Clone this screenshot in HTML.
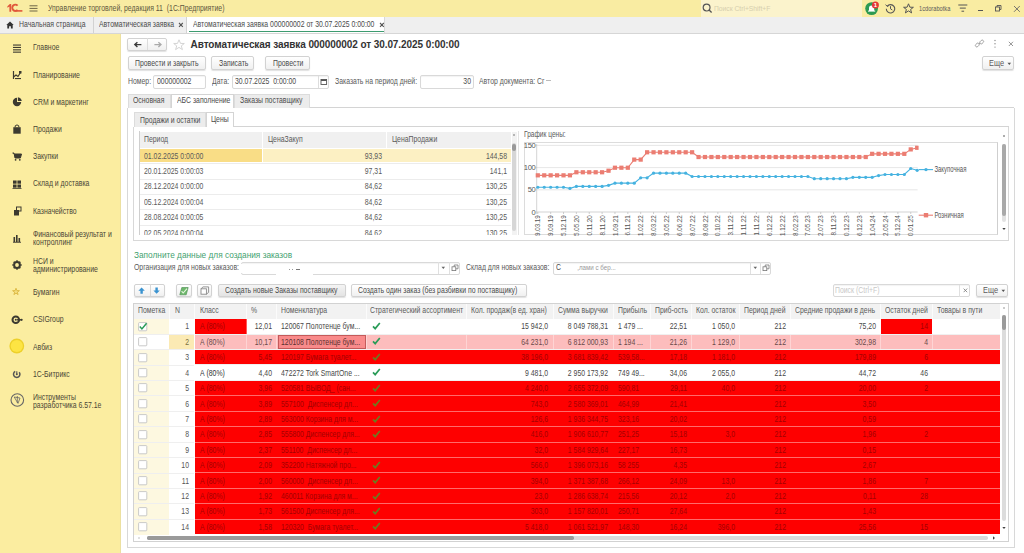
<!DOCTYPE html><html><head><meta charset="utf-8"><style>
html,body{margin:0;padding:0;}
body{width:1024px;height:553px;position:relative;overflow:hidden;background:#fff;font-family:"Liberation Sans", sans-serif;}
div{position:absolute;}
.t{white-space:pre;line-height:20px;height:20px;}
</style></head><body><div style="left:0.00px;top:0.00px;width:1024.00px;height:17.00px;background:#f9eca2;"></div>
<div style="left:0.00px;top:16.50px;width:1024.00px;height:0.80px;background:#e6dba0;"></div>
<svg style="position:absolute;left:0.00px;top:0.00px;" width="30" height="17" viewBox="0 0 30 17"><path d="M7.4 6.3 L9.9 4.1 L11.2 4.1 L11.2 11.7 L9.4 11.7 L9.4 6.6 L7.4 7.8 Z" fill="#e0573b"/><path d="M17.6 5.6 A3.1 3.1 0 1 0 17.6 9.9" fill="none" stroke="#e0573b" stroke-width="1.9"/><rect x="14.6" y="10.1" width="7.8" height="1.6" fill="#e0573b"/></svg>
<svg style="position:absolute;left:29.00px;top:4.50px;" width="9" height="7" viewBox="0 0 9 7"><rect x="0.5" y="0.3" width="8" height="1" fill="#6e6748"/><rect x="0.5" y="2.9" width="8" height="1" fill="#6e6748"/><rect x="0.5" y="5.5" width="8" height="1" fill="#6e6748"/></svg>
<div class="t" style="left:48.00px;top:-1.00px;font-size:8.2px;color:#5e5840;font-weight:400;letter-spacing:0.00px;transform:scaleX(0.84);transform-origin:0 50%;">Управление торговлей, редакция 11  (1С:Предприятие)</div>
<div style="left:700.50px;top:0.00px;width:161.50px;height:16.50px;background:#fbf3cc;"></div>
<svg style="position:absolute;left:701.50px;top:3.00px;" width="11" height="11" viewBox="0 0 11 11"><circle cx="4.6" cy="4.6" r="3.4" fill="none" stroke="#555" stroke-width="1.2"/><line x1="7.1" y1="7.1" x2="9.6" y2="9.6" stroke="#555" stroke-width="1.4"/></svg>
<div class="t" style="left:714.00px;top:-1.00px;font-size:8.0px;color:#d6cfae;font-weight:400;letter-spacing:0.00px;transform:scaleX(0.84);transform-origin:0 50%;">Поиск Ctrl+Shift+F</div>
<svg style="position:absolute;left:864.00px;top:1.00px;" width="17" height="15" viewBox="0 0 17 15"><circle cx="7.6" cy="7.6" r="6.4" fill="#2d9a52"/><path d="M5 10 L5 7 Q5 4.4 7.6 4.4 Q10.2 4.4 10.2 7 L10.2 10 Z" fill="#fff"/><rect x="4" y="9.6" width="7.2" height="1" fill="#fff"/><circle cx="11.4" cy="4" r="3.5" fill="#e53935"/><text x="11.4" y="6.3" font-family="Liberation Sans" font-size="6" font-weight="700" fill="#fff" text-anchor="middle">1</text></svg>
<svg style="position:absolute;left:884.50px;top:3.00px;" width="11" height="11" viewBox="0 0 11 11"><path d="M2.2 3.2 A4.2 4.2 0 1 1 1.3 5.8" fill="none" stroke="#555" stroke-width="1.1"/><path d="M0.6 1.6 L2.4 3.6 L4.2 2.2" fill="none" stroke="#555" stroke-width="1"/><path d="M5.5 3.2 L5.5 5.8 L7.3 7" fill="none" stroke="#555" stroke-width="1"/></svg>
<svg style="position:absolute;left:902.50px;top:2.50px;" width="11" height="11" viewBox="0 0 11 11"><path d="M5.5 0.8 L6.9 4.2 L10.4 4.3 L7.6 6.5 L8.6 9.9 L5.5 7.9 L2.4 9.9 L3.4 6.5 L0.6 4.3 L4.1 4.2 Z" fill="none" stroke="#555" stroke-width="1"/></svg>
<div class="t" style="left:919.40px;top:-1.20px;font-size:7.6px;color:#5a5a5a;font-weight:400;letter-spacing:0.00px;transform:scaleX(0.75);transform-origin:0 50%;">1cdorabotka</div>
<svg style="position:absolute;left:957.50px;top:4.00px;" width="10" height="9" viewBox="0 0 10 9"><rect x="0.3" y="0.5" width="9" height="1" fill="#555"/><rect x="1.8" y="3.6" width="6" height="1" fill="#555"/><rect x="3.5" y="6.7" width="2.6" height="1" fill="#555"/></svg>
<div style="left:977.80px;top:10.00px;width:5.60px;height:1.00px;background:#555;"></div>
<svg style="position:absolute;left:995.00px;top:5.00px;" width="7" height="7" viewBox="0 0 7 7"><rect x="0.5" y="2" width="4" height="4" fill="none" stroke="#555" stroke-width="0.9"/><path d="M2 2 L2 0.5 L6 0.5 L6 4.5 L4.5 4.5" fill="none" stroke="#555" stroke-width="0.9"/></svg>
<svg style="position:absolute;left:1013.00px;top:4.50px;" width="8" height="8" viewBox="0 0 8 8"><path d="M1 1 L6.8 6.8 M6.8 1 L1 6.8" stroke="#666" stroke-width="0.9"/></svg>
<div style="left:0.00px;top:17.30px;width:1024.00px;height:16.40px;background:#efefef;"></div>
<div style="left:0.00px;top:33.20px;width:1024.00px;height:0.80px;background:#d6d6d6;"></div>
<svg style="position:absolute;left:5.50px;top:21.00px;" width="8" height="8" viewBox="0 0 8 8"><path d="M0.3 4 L4 0.4 L7.7 4 L6.7 4 L6.7 7.4 L4.9 7.4 L4.9 5.2 L3.1 5.2 L3.1 7.4 L1.3 7.4 L1.3 4 Z" fill="#333"/></svg>
<div class="t" style="left:19.30px;top:15.40px;font-size:8.2px;color:#4a4a4a;font-weight:400;letter-spacing:0.00px;transform:scaleX(0.84);transform-origin:0 50%;">Начальная страница</div>
<div style="left:93.20px;top:17.30px;width:0.80px;height:16.00px;background:#d2d2d2;"></div>
<div class="t" style="left:99.00px;top:15.40px;font-size:8.2px;color:#4a4a4a;font-weight:400;letter-spacing:0.00px;transform:scaleX(0.84);transform-origin:0 50%;">Автоматическая заявка</div>
<svg style="position:absolute;left:177.80px;top:22.00px;" width="6" height="6" viewBox="0 0 6 6"><path d="M1 1 L4.8 4.8 M4.8 1 L1 4.8" stroke="#555" stroke-width="1.1"/></svg>
<div style="left:186.00px;top:17.30px;width:0.80px;height:16.00px;background:#d2d2d2;"></div>
<div style="left:186.80px;top:17.30px;width:197.20px;height:16.20px;background:#fff;"></div>
<div class="t" style="left:192.60px;top:15.40px;font-size:8.2px;color:#4a4a4a;font-weight:400;letter-spacing:0.00px;transform:scaleX(0.84);transform-origin:0 50%;">Автоматическая заявка 000000002 от 30.07.2025 0:00:00</div>
<svg style="position:absolute;left:378.50px;top:22.00px;" width="6" height="6" viewBox="0 0 6 6"><path d="M1 1 L4.8 4.8 M4.8 1 L1 4.8" stroke="#555" stroke-width="1.1"/></svg>
<div style="left:189.00px;top:30.80px;width:194.50px;height:1.20px;background:#3d9b70;"></div>
<div style="left:384.00px;top:17.30px;width:0.80px;height:16.00px;background:#d8d8d8;"></div>
<div style="left:0.00px;top:34.00px;width:121.00px;height:519.00px;background:#fbeda0;"></div>
<div style="left:120.40px;top:34.00px;width:0.90px;height:519.00px;background:#ece0a0;"></div>
<div class="t" style="left:32.90px;top:38.30px;font-size:8.2px;color:#4a4636;font-weight:400;letter-spacing:0.00px;transform:scaleX(0.84);transform-origin:0 50%;">Главное</div>
<div class="t" style="left:32.90px;top:65.50px;font-size:8.2px;color:#4a4636;font-weight:400;letter-spacing:0.00px;transform:scaleX(0.84);transform-origin:0 50%;">Планирование</div>
<div class="t" style="left:32.90px;top:92.70px;font-size:8.2px;color:#4a4636;font-weight:400;letter-spacing:0.00px;transform:scaleX(0.84);transform-origin:0 50%;">CRM и маркетинг</div>
<div class="t" style="left:32.90px;top:119.90px;font-size:8.2px;color:#4a4636;font-weight:400;letter-spacing:0.00px;transform:scaleX(0.84);transform-origin:0 50%;">Продажи</div>
<div class="t" style="left:32.90px;top:147.10px;font-size:8.2px;color:#4a4636;font-weight:400;letter-spacing:0.00px;transform:scaleX(0.84);transform-origin:0 50%;">Закупки</div>
<div class="t" style="left:32.90px;top:174.30px;font-size:8.2px;color:#4a4636;font-weight:400;letter-spacing:0.00px;transform:scaleX(0.84);transform-origin:0 50%;">Склад и доставка</div>
<div class="t" style="left:32.90px;top:201.50px;font-size:8.2px;color:#4a4636;font-weight:400;letter-spacing:0.00px;transform:scaleX(0.84);transform-origin:0 50%;">Казначейство</div>
<div class="t" style="left:32.90px;top:224.60px;font-size:8.2px;color:#4a4636;font-weight:400;letter-spacing:0.00px;transform:scaleX(0.84);transform-origin:0 50%;">Финансовый результат и</div>
<div class="t" style="left:32.90px;top:232.80px;font-size:8.2px;color:#4a4636;font-weight:400;letter-spacing:0.00px;transform:scaleX(0.84);transform-origin:0 50%;">контроллинг</div>
<div class="t" style="left:32.90px;top:251.80px;font-size:8.2px;color:#4a4636;font-weight:400;letter-spacing:0.00px;transform:scaleX(0.84);transform-origin:0 50%;">НСИ и</div>
<div class="t" style="left:32.90px;top:260.00px;font-size:8.2px;color:#4a4636;font-weight:400;letter-spacing:0.00px;transform:scaleX(0.84);transform-origin:0 50%;">администрирование</div>
<div class="t" style="left:32.90px;top:283.10px;font-size:8.2px;color:#4a4636;font-weight:400;letter-spacing:0.00px;transform:scaleX(0.84);transform-origin:0 50%;">Бумагин</div>
<div class="t" style="left:32.90px;top:310.30px;font-size:8.2px;color:#4a4636;font-weight:400;letter-spacing:0.00px;transform:scaleX(0.84);transform-origin:0 50%;">CSIGroup</div>
<div class="t" style="left:32.90px;top:337.50px;font-size:8.2px;color:#4a4636;font-weight:400;letter-spacing:0.00px;transform:scaleX(0.84);transform-origin:0 50%;">Авбиз</div>
<div class="t" style="left:32.90px;top:364.70px;font-size:8.2px;color:#4a4636;font-weight:400;letter-spacing:0.00px;transform:scaleX(0.84);transform-origin:0 50%;">1С-Битрикс</div>
<div class="t" style="left:32.90px;top:387.80px;font-size:8.2px;color:#4a4636;font-weight:400;letter-spacing:0.00px;transform:scaleX(0.84);transform-origin:0 50%;">Инструменты</div>
<div class="t" style="left:32.90px;top:396.00px;font-size:8.2px;color:#4a4636;font-weight:400;letter-spacing:0.00px;transform:scaleX(0.84);transform-origin:0 50%;">разработчика 6.57.1е</div>
<svg style="position:absolute;left:11.00px;top:41.60px;" width="12" height="12" viewBox="0 0 12 12"><rect x="2" y="2.5" width="8" height="1.1" fill="#3c3a30"/><rect x="2" y="4.9" width="8" height="1.1" fill="#3c3a30"/><rect x="2" y="7.3" width="8" height="1.1" fill="#3c3a30"/><rect x="2" y="9.6" width="8" height="1.1" fill="#3c3a30"/></svg>
<svg style="position:absolute;left:11.00px;top:68.80px;" width="12" height="12" viewBox="0 0 12 12"><path d="M2.5 2 L2.5 10 M2.5 8 L5 6 L7 7.5 L9.5 3.5" fill="none" stroke="#3c3a30" stroke-width="1.2"/><rect x="8" y="2" width="2.5" height="2.5" fill="#3c3a30"/><rect x="4" y="9" width="6" height="1.1" fill="#3c3a30"/></svg>
<svg style="position:absolute;left:11.00px;top:96.00px;" width="12" height="12" viewBox="0 0 12 12"><path d="M6 6 L6 1.8 A4.2 4.2 0 1 0 10.2 6 Z" fill="#3c3a30"/><path d="M6.9 1.2 A4.6 4.6 0 0 1 10.8 5.1 L6.9 5.1 Z" fill="#3c3a30"/></svg>
<svg style="position:absolute;left:11.00px;top:123.20px;" width="12" height="12" viewBox="0 0 12 12"><rect x="2.3" y="4.2" width="7.4" height="6.5" fill="#3c3a30"/><path d="M4.2 4.2 L4.2 2.8 Q6 1 7.8 2.8 L7.8 4.2" fill="none" stroke="#3c3a30" stroke-width="1"/></svg>
<svg style="position:absolute;left:11.00px;top:150.40px;" width="12" height="12" viewBox="0 0 12 12"><path d="M1.5 3 L3 3 L4 8 L9.4 8 L10.5 4 L3.5 4" fill="#3c3a30" stroke="#3c3a30" stroke-width="1"/><circle cx="4.6" cy="9.8" r="0.9" fill="#3c3a30"/><circle cx="8.8" cy="9.8" r="0.9" fill="#3c3a30"/></svg>
<svg style="position:absolute;left:11.00px;top:177.60px;" width="12" height="12" viewBox="0 0 12 12"><rect x="2" y="2.5" width="3.6" height="3.2" fill="#3c3a30"/><rect x="6.4" y="2.5" width="3.6" height="3.2" fill="#3c3a30"/><rect x="2" y="6.5" width="3.6" height="3.2" fill="#3c3a30"/><rect x="6.4" y="6.5" width="3.6" height="3.2" fill="#3c3a30"/><rect x="1.5" y="10" width="9" height="0.8" fill="#3c3a30"/></svg>
<svg style="position:absolute;left:11.00px;top:204.80px;" width="12" height="12" viewBox="0 0 12 12"><rect x="3" y="5" width="5" height="5.5" fill="#3c3a30"/><rect x="5.5" y="2" width="4.5" height="4" fill="none" stroke="#3c3a30" stroke-width="1"/></svg>
<svg style="position:absolute;left:11.00px;top:232.00px;" width="12" height="12" viewBox="0 0 12 12"><rect x="2.5" y="5" width="1.6" height="5" fill="#3c3a30"/><rect x="5" y="3" width="1.6" height="7" fill="#3c3a30"/><rect x="7.5" y="6" width="1.6" height="4" fill="#3c3a30"/><rect x="2" y="9.8" width="8" height="0.9" fill="#3c3a30"/></svg>
<svg style="position:absolute;left:11.00px;top:259.20px;" width="12" height="12" viewBox="0 0 12 12"><circle cx="6" cy="6" r="2.9" fill="none" stroke="#3c3a30" stroke-width="2"/><path d="M6 1.3 L6 2.6 M6 9.4 L6 10.7 M1.3 6 L2.6 6 M9.4 6 L10.7 6 M2.7 2.7 L3.6 3.6 M8.4 8.4 L9.3 9.3 M2.7 9.3 L3.6 8.4 M8.4 3.6 L9.3 2.7" stroke="#3c3a30" stroke-width="1.5"/></svg>
<svg style="position:absolute;left:11.00px;top:286.40px;" width="12" height="12" viewBox="0 0 12 12"><path d="M5 2.2 L5.9 4.6 L8.4 4.7 L6.4 6.2 L7.1 8.6 L5 7.2 L2.9 8.6 L3.6 6.2 L1.6 4.7 L4.1 4.6 Z" fill="#f3dc7a" stroke="#d8b23a" stroke-width="0.8"/></svg>
<svg style="position:absolute;left:11.00px;top:313.60px;" width="12" height="12" viewBox="0 0 12 12"><circle cx="4.8" cy="5.8" r="3.3" fill="none" stroke="#3c3a30" stroke-width="2"/><circle cx="4.8" cy="5.8" r="1" fill="#3c3a30"/><rect x="6" y="5.1" width="4" height="1.4" fill="#3c3a30"/><circle cx="10.6" cy="5.8" r="1.1" fill="#3c3a30"/></svg>
<svg style="position:absolute;left:9.00px;top:338.40px;" width="17" height="17" viewBox="0 0 17 17"><circle cx="7.8" cy="8" r="7.4" fill="#edd02a"/><circle cx="7.8" cy="8" r="6.1" fill="#fde443"/></svg>
<svg style="position:absolute;left:11.00px;top:368.00px;" width="12" height="12" viewBox="0 0 12 12"><path d="M4.2 3.4 A3.2 3.2 0 1 0 8.2 4.2" fill="none" stroke="#555" stroke-width="1.5"/><circle cx="5.8" cy="6.2" r="1" fill="#555"/><path d="M5.8 6.2 L5.8 3.2" stroke="#555" stroke-width="1.1"/></svg>
<svg style="position:absolute;left:8.50px;top:391.40px;" width="18" height="18" viewBox="0 0 18 18"><circle cx="8.3" cy="9" r="6.3" fill="none" stroke="#666" stroke-width="1.1"/><path d="M5.2 6 L11 7 L9 12.4 Z" fill="none" stroke="#666" stroke-width="0.8"/><path d="M8.3 5 L8.3 12" stroke="#666" stroke-width="0.8"/></svg>
<div style="left:127.30px;top:37.60px;width:39.30px;height:13.00px;box-sizing:border-box;border:1px solid #d2d2d2;border-radius:2px;background:linear-gradient(#ffffff,#f0f0f0);box-shadow:0 1px 1px rgba(0,0,0,0.12);"></div>
<div style="left:147.40px;top:38.20px;width:0.80px;height:12.00px;background:#dcdcdc;"></div>
<svg style="position:absolute;left:133.00px;top:39.50px;" width="10" height="10" viewBox="0 0 10 10"><path d="M8.4 4.6 L1.8 4.6 M4.4 2.2 L1.8 4.6 L4.4 7" fill="none" stroke="#3a3a3a" stroke-width="1.4"/></svg>
<svg style="position:absolute;left:152.50px;top:39.50px;" width="10" height="10" viewBox="0 0 10 10"><path d="M1.4 4.6 L8 4.6 M5.4 2.2 L8 4.6 L5.4 7" fill="none" stroke="#aaa" stroke-width="1.3"/></svg>
<svg style="position:absolute;left:172.50px;top:38.50px;" width="12" height="12" viewBox="0 0 12 12"><path d="M6 0.8 L7.5 4.4 L11.3 4.5 L8.3 6.9 L9.4 10.6 L6 8.4 L2.6 10.6 L3.7 6.9 L0.7 4.5 L4.5 4.4 Z" fill="none" stroke="#cfcfcf" stroke-width="0.9"/></svg>
<div class="t" style="left:190.60px;top:35.30px;font-size:10.0px;color:#333;font-weight:700;letter-spacing:-0.08px;transform-origin:0 50%;">Автоматическая заявка 000000002 от 30.07.2025 0:00:00</div>
<svg style="position:absolute;left:973.50px;top:38.00px;" width="11" height="11" viewBox="0 0 11 11"><path d="M4.8 6.2 L6.2 4.8" stroke="#9a9a9a" stroke-width="0.9"/><rect x="1.2" y="5.6" width="4.2" height="2.8" rx="1.3" transform="rotate(-45 3.3 7)" fill="none" stroke="#9a9a9a" stroke-width="0.9"/><rect x="5.6" y="2.6" width="4.2" height="2.8" rx="1.3" transform="rotate(-45 7.7 4)" fill="none" stroke="#9a9a9a" stroke-width="0.9"/></svg>
<svg style="position:absolute;left:992.50px;top:39.00px;" width="4" height="10" viewBox="0 0 4 10"><circle cx="2" cy="1.5" r="0.7" fill="#888"/><circle cx="2" cy="4.8" r="0.7" fill="#888"/><circle cx="2" cy="8.1" r="0.7" fill="#888"/></svg>
<svg style="position:absolute;left:1007.50px;top:41.00px;" width="6" height="6" viewBox="0 0 6 6"><path d="M0.8 0.8 L5 5 M5 0.8 L0.8 5" stroke="#888" stroke-width="0.9"/></svg>
<div style="left:127.50px;top:56.00px;width:78.10px;height:14.00px;box-sizing:border-box;border:1px solid #d2d2d2;border-radius:2px;background:linear-gradient(#ffffff,#f0f0f0);box-shadow:0 1px 1px rgba(0,0,0,0.12);"></div>
<div class="t" style="left:135.00px;top:53.80px;font-size:8.2px;color:#4a4a4a;font-weight:400;letter-spacing:0.00px;transform:scaleX(0.84);transform-origin:0 50%;">Провести и закрыть</div>
<div style="left:210.50px;top:56.00px;width:43.50px;height:14.00px;box-sizing:border-box;border:1px solid #d2d2d2;border-radius:2px;background:linear-gradient(#ffffff,#f0f0f0);box-shadow:0 1px 1px rgba(0,0,0,0.12);"></div>
<div class="t" style="left:218.50px;top:53.80px;font-size:8.2px;color:#4a4a4a;font-weight:400;letter-spacing:0.00px;transform:scaleX(0.84);transform-origin:0 50%;">Записать</div>
<div style="left:265.20px;top:56.00px;width:44.80px;height:14.00px;box-sizing:border-box;border:1px solid #d2d2d2;border-radius:2px;background:linear-gradient(#ffffff,#f0f0f0);box-shadow:0 1px 1px rgba(0,0,0,0.12);"></div>
<div class="t" style="left:272.50px;top:53.80px;font-size:8.2px;color:#4a4a4a;font-weight:400;letter-spacing:0.00px;transform:scaleX(0.84);transform-origin:0 50%;">Провести</div>
<div style="left:981.80px;top:56.00px;width:32.20px;height:13.50px;box-sizing:border-box;border:1px solid #d2d2d2;border-radius:2px;background:linear-gradient(#ffffff,#f0f0f0);box-shadow:0 1px 1px rgba(0,0,0,0.12);"></div>
<div class="t" style="left:988.90px;top:53.60px;font-size:8.2px;color:#5a5a5a;font-weight:400;letter-spacing:0.00px;transform:scaleX(0.9);transform-origin:0 50%;">Еще</div>
<svg style="position:absolute;left:1007.00px;top:61.80px;" width="5" height="4" viewBox="0 0 5 4"><path d="M0.5 0.8 L4.1 0.8 L2.3 3 Z" fill="#555"/></svg>
<div class="t" style="left:128.00px;top:72.40px;font-size:8.2px;color:#5a5a5a;font-weight:400;letter-spacing:0.00px;transform:scaleX(0.84);transform-origin:0 50%;">Номер:</div>
<div style="left:153.00px;top:75.00px;width:53.00px;height:13.60px;box-sizing:border-box;border:1px solid #d9d9d9;border-radius:2px;background:#fff;box-shadow:inset 0 1px 1px rgba(0,0,0,0.05);"></div>
<div class="t" style="left:156.50px;top:72.40px;font-size:8.2px;color:#4a4a4a;font-weight:400;letter-spacing:0.00px;transform:scaleX(0.84);transform-origin:0 50%;">000000002</div>
<div class="t" style="left:212.00px;top:72.40px;font-size:8.2px;color:#5a5a5a;font-weight:400;letter-spacing:0.00px;transform:scaleX(0.84);transform-origin:0 50%;">Дата:</div>
<div style="left:232.00px;top:75.00px;width:97.40px;height:13.60px;box-sizing:border-box;border:1px solid #d9d9d9;border-radius:2px;background:#fff;box-shadow:inset 0 1px 1px rgba(0,0,0,0.05);"></div>
<div style="left:317.50px;top:75.50px;width:0.80px;height:12.60px;background:#ddd;"></div>
<div class="t" style="left:234.50px;top:72.40px;font-size:8.2px;color:#4a4a4a;font-weight:400;letter-spacing:0.00px;transform:scaleX(0.84);transform-origin:0 50%;">30.07.2025  0:00:00</div>
<svg style="position:absolute;left:319.80px;top:77.50px;" width="8" height="8" viewBox="0 0 8 8"><rect x="1" y="1.5" width="5.6" height="5" fill="none" stroke="#555" stroke-width="0.9"/><rect x="1" y="1.5" width="5.6" height="1.5" fill="#555"/></svg>
<div class="t" style="left:334.50px;top:72.40px;font-size:8.2px;color:#5a5a5a;font-weight:400;letter-spacing:0.00px;transform:scaleX(0.84);transform-origin:0 50%;">Заказать на период дней:</div>
<div style="left:420.00px;top:75.00px;width:53.70px;height:13.60px;box-sizing:border-box;border:1px solid #d9d9d9;border-radius:2px;background:#fff;box-shadow:inset 0 1px 1px rgba(0,0,0,0.05);"></div>
<div class="t" style="left:71.00px;width:400px;text-align:right;top:72.40px;font-size:8.2px;color:#4a4a4a;font-weight:400;letter-spacing:0.00px;transform:scaleX(0.84);transform-origin:100% 50%;">30</div>
<div class="t" style="left:478.80px;top:72.40px;font-size:8.2px;color:#5a5a5a;font-weight:400;letter-spacing:0.00px;transform:scaleX(0.84);transform-origin:0 50%;">Автор документа: Сг</div>
<div style="left:546.00px;top:80.00px;width:5.00px;height:0.80px;background:#bbb;"></div>
<div style="left:127.50px;top:107.20px;width:886.80px;height:0.90px;background:#d4d4d4;"></div>
<div style="left:127.50px;top:93.60px;width:43.20px;height:14.00px;box-sizing:border-box;border:1px solid #dcdcdc;border-bottom:none;background:#ececec;"></div>
<div class="t" style="left:133.10px;top:91.40px;font-size:8.2px;color:#4a4a4a;font-weight:400;letter-spacing:0.00px;transform:scaleX(0.84);transform-origin:0 50%;">Основная</div>
<div style="left:170.60px;top:93.60px;width:63.80px;height:14.60px;box-sizing:border-box;border:1px solid #d4d4d4;border-bottom:none;background:#fff;"></div>
<div class="t" style="left:176.60px;top:91.20px;font-size:8.2px;color:#4a4a4a;font-weight:400;letter-spacing:0.00px;transform:scaleX(0.84);transform-origin:0 50%;">АБС заполнение</div>
<div style="left:234.40px;top:93.60px;width:76.00px;height:14.00px;box-sizing:border-box;border:1px solid #dcdcdc;border-bottom:none;background:#ececec;"></div>
<div class="t" style="left:240.20px;top:91.40px;font-size:8.2px;color:#4a4a4a;font-weight:400;letter-spacing:0.00px;transform:scaleX(0.84);transform-origin:0 50%;">Заказы поставщику</div>
<div style="left:127.20px;top:107.50px;width:0.90px;height:440.00px;background:#d8d8d8;"></div>
<div style="left:1013.60px;top:107.50px;width:0.90px;height:440.00px;background:#d8d8d8;"></div>
<div style="left:127.20px;top:546.80px;width:887.30px;height:0.90px;background:#d8d8d8;"></div>
<div style="left:133.70px;top:126.40px;width:875.00px;height:0.90px;background:#d4d4d4;"></div>
<div style="left:133.70px;top:112.40px;width:72.00px;height:14.20px;box-sizing:border-box;border:1px solid #dcdcdc;border-bottom:none;background:#ececec;"></div>
<div class="t" style="left:139.50px;top:110.60px;font-size:8.2px;color:#4a4a4a;font-weight:400;letter-spacing:0.00px;transform:scaleX(0.84);transform-origin:0 50%;">Продажи и остатки</div>
<div style="left:205.60px;top:112.40px;width:28.40px;height:14.60px;box-sizing:border-box;border:1px solid #d4d4d4;border-bottom:none;background:#fff;"></div>
<div class="t" style="left:211.20px;top:110.40px;font-size:8.2px;color:#4a4a4a;font-weight:400;letter-spacing:0.00px;transform:scaleX(0.84);transform-origin:0 50%;">Цены</div>
<div style="left:133.40px;top:126.50px;width:0.90px;height:114.00px;background:#d8d8d8;"></div>
<div style="left:1008.10px;top:126.50px;width:0.90px;height:114.00px;background:#d8d8d8;"></div>
<div style="left:133.40px;top:239.50px;width:875.60px;height:0.90px;background:#d8d8d8;"></div>
<div style="left:139.00px;top:130.50px;width:0.90px;height:104.50px;background:#cfcfcf;"></div>
<div style="left:139.90px;top:131.50px;width:370.90px;height:16.30px;background:#f0f0f0;"></div>
<div style="left:262.20px;top:131.50px;width:0.80px;height:16.30px;background:#fff;"></div>
<div style="left:386.30px;top:131.50px;width:0.80px;height:16.30px;background:#fff;"></div>
<div class="t" style="left:144.00px;top:129.80px;font-size:8.2px;color:#5a5a5a;font-weight:400;letter-spacing:0.00px;transform:scaleX(0.84);transform-origin:0 50%;">Период</div>
<div class="t" style="left:267.80px;top:129.80px;font-size:8.2px;color:#5a5a5a;font-weight:400;letter-spacing:0.00px;transform:scaleX(0.84);transform-origin:0 50%;">ЦенаЗакуп</div>
<div class="t" style="left:391.80px;top:129.80px;font-size:8.2px;color:#5a5a5a;font-weight:400;letter-spacing:0.00px;transform:scaleX(0.84);transform-origin:0 50%;">ЦенаПродажи</div>
<div style="left:139.90px;top:149.00px;width:122.30px;height:12.60px;background:#f9dd86;"></div>
<div style="left:263.00px;top:149.00px;width:247.80px;height:12.60px;background:#fcf0c3;"></div>
<div class="t" style="left:144.00px;top:146.50px;font-size:8.2px;color:#5a5a5a;font-weight:400;letter-spacing:0.00px;transform:scaleX(0.84);transform-origin:0 50%;">01.02.2025 0:00:00</div>
<div class="t" style="left:-17.80px;width:400px;text-align:right;top:146.50px;font-size:8.2px;color:#5a5a5a;font-weight:400;letter-spacing:0.00px;transform:scaleX(0.84);transform-origin:100% 50%;">93,93</div>
<div class="t" style="left:107.20px;width:400px;text-align:right;top:146.50px;font-size:8.2px;color:#5a5a5a;font-weight:400;letter-spacing:0.00px;transform:scaleX(0.84);transform-origin:100% 50%;">144,58</div>
<div style="left:139.90px;top:163.20px;width:370.90px;height:0.80px;background:#ececec;"></div>
<div class="t" style="left:144.00px;top:161.90px;font-size:8.2px;color:#5a5a5a;font-weight:400;letter-spacing:0.00px;transform:scaleX(0.84);transform-origin:0 50%;">20.01.2025 0:00:03</div>
<div class="t" style="left:-17.80px;width:400px;text-align:right;top:161.90px;font-size:8.2px;color:#5a5a5a;font-weight:400;letter-spacing:0.00px;transform:scaleX(0.84);transform-origin:100% 50%;">97,31</div>
<div class="t" style="left:107.20px;width:400px;text-align:right;top:161.90px;font-size:8.2px;color:#5a5a5a;font-weight:400;letter-spacing:0.00px;transform:scaleX(0.84);transform-origin:100% 50%;">141,1</div>
<div style="left:139.90px;top:178.60px;width:370.90px;height:0.80px;background:#ececec;"></div>
<div class="t" style="left:144.00px;top:177.30px;font-size:8.2px;color:#5a5a5a;font-weight:400;letter-spacing:0.00px;transform:scaleX(0.84);transform-origin:0 50%;">28.12.2024 0:00:00</div>
<div class="t" style="left:-17.80px;width:400px;text-align:right;top:177.30px;font-size:8.2px;color:#5a5a5a;font-weight:400;letter-spacing:0.00px;transform:scaleX(0.84);transform-origin:100% 50%;">84,62</div>
<div class="t" style="left:107.20px;width:400px;text-align:right;top:177.30px;font-size:8.2px;color:#5a5a5a;font-weight:400;letter-spacing:0.00px;transform:scaleX(0.84);transform-origin:100% 50%;">130,25</div>
<div style="left:139.90px;top:194.00px;width:370.90px;height:0.80px;background:#ececec;"></div>
<div class="t" style="left:144.00px;top:192.70px;font-size:8.2px;color:#5a5a5a;font-weight:400;letter-spacing:0.00px;transform:scaleX(0.84);transform-origin:0 50%;">05.12.2024 0:00:04</div>
<div class="t" style="left:-17.80px;width:400px;text-align:right;top:192.70px;font-size:8.2px;color:#5a5a5a;font-weight:400;letter-spacing:0.00px;transform:scaleX(0.84);transform-origin:100% 50%;">84,62</div>
<div class="t" style="left:107.20px;width:400px;text-align:right;top:192.70px;font-size:8.2px;color:#5a5a5a;font-weight:400;letter-spacing:0.00px;transform:scaleX(0.84);transform-origin:100% 50%;">130,25</div>
<div style="left:139.90px;top:209.40px;width:370.90px;height:0.80px;background:#ececec;"></div>
<div class="t" style="left:144.00px;top:208.10px;font-size:8.2px;color:#5a5a5a;font-weight:400;letter-spacing:0.00px;transform:scaleX(0.84);transform-origin:0 50%;">28.08.2024 0:00:05</div>
<div class="t" style="left:-17.80px;width:400px;text-align:right;top:208.10px;font-size:8.2px;color:#5a5a5a;font-weight:400;letter-spacing:0.00px;transform:scaleX(0.84);transform-origin:100% 50%;">84,62</div>
<div class="t" style="left:107.20px;width:400px;text-align:right;top:208.10px;font-size:8.2px;color:#5a5a5a;font-weight:400;letter-spacing:0.00px;transform:scaleX(0.84);transform-origin:100% 50%;">130,25</div>
<div style="left:139.90px;top:224.80px;width:370.90px;height:0.80px;background:#ececec;"></div>
<div class="t" style="left:144.00px;top:223.50px;font-size:8.2px;color:#5a5a5a;font-weight:400;letter-spacing:0.00px;transform:scaleX(0.84);transform-origin:0 50%;">02.05.2024 0:00:04</div>
<div class="t" style="left:-17.80px;width:400px;text-align:right;top:223.50px;font-size:8.2px;color:#5a5a5a;font-weight:400;letter-spacing:0.00px;transform:scaleX(0.84);transform-origin:100% 50%;">84,62</div>
<div class="t" style="left:107.20px;width:400px;text-align:right;top:223.50px;font-size:8.2px;color:#5a5a5a;font-weight:400;letter-spacing:0.00px;transform:scaleX(0.84);transform-origin:100% 50%;">130,25</div>
<div style="left:139.90px;top:234.60px;width:378.00px;height:5.00px;background:#fff;"></div>
<div style="left:511.50px;top:131.50px;width:5.20px;height:103.00px;background:#f2f2f2;"></div>
<div style="left:511.80px;top:143.00px;width:4.40px;height:88.00px;background:#d6d6d6;border-radius:2px;"></div>
<div style="left:511.80px;top:143.50px;width:4.40px;height:7.00px;background:#999;border-radius:2px;"></div>
<svg style="position:absolute;left:512.00px;top:133.00px;" width="4" height="4" viewBox="0 0 4 4"><circle cx="2" cy="2" r="0.8" fill="#666"/></svg>
<div style="left:518.20px;top:130.50px;width:0.80px;height:104.50px;background:#e2e2e2;"></div>
<div class="t" style="left:524.20px;top:125.20px;font-size:8.2px;color:#5a5a5a;font-weight:400;letter-spacing:0.00px;transform:scaleX(0.8);transform-origin:0 50%;">График цены:</div>
<div style="left:524.00px;top:142.00px;width:473.50px;height:93.00px;box-sizing:border-box;border:1px solid #dcdcdc;border-right:1px solid #cfcfcf;background:#fff;"></div>
<div style="left:1001.60px;top:143.50px;width:4.60px;height:78.50px;background:#e2e2e2;border-radius:2.3px;"></div>
<div style="left:1001.60px;top:143.50px;width:4.60px;height:72.20px;background:#a9a9a9;border-radius:2.3px;"></div>
<svg style="position:absolute;left:1002.00px;top:134.00px;" width="4" height="4" viewBox="0 0 4 4"><circle cx="2" cy="2" r="0.8" fill="#444"/></svg>
<svg style="position:absolute;left:1002.00px;top:227.00px;" width="4" height="4" viewBox="0 0 4 4"><path d="M0.3 1 L3.7 1 L2 3 Z" fill="#444"/></svg>
<svg style="position:absolute;left:0;top:0" width="1024" height="553" viewBox="0 0 1024 553"><line x1="536.7" y1="145.40" x2="917.6" y2="145.40" stroke="#e0e0e0" stroke-width="0.8"/><line x1="536.7" y1="167.60" x2="917.6" y2="167.60" stroke="#e0e0e0" stroke-width="0.8"/><line x1="536.7" y1="189.80" x2="917.6" y2="189.80" stroke="#e0e0e0" stroke-width="0.8"/><line x1="536.7" y1="212" x2="917.6" y2="212" stroke="#c8c8c8" stroke-width="0.8"/><line x1="536.7" y1="144" x2="536.7" y2="214" stroke="#c8c8c8" stroke-width="0.8"/><text x="535.3" y="148.00" font-family="Liberation Sans" font-size="7.6" fill="#555" text-anchor="end" letter-spacing="-0.4">150</text><line x1="534.8" y1="145.40" x2="536.7" y2="145.40" stroke="#bbb" stroke-width="0.7"/><text x="535.3" y="170.20" font-family="Liberation Sans" font-size="7.6" fill="#555" text-anchor="end" letter-spacing="-0.4">100</text><line x1="534.8" y1="167.60" x2="536.7" y2="167.60" stroke="#bbb" stroke-width="0.7"/><text x="535.3" y="192.40" font-family="Liberation Sans" font-size="7.6" fill="#555" text-anchor="end" letter-spacing="-0.4">50</text><line x1="534.8" y1="189.80" x2="536.7" y2="189.80" stroke="#bbb" stroke-width="0.7"/><text x="535.3" y="214.60" font-family="Liberation Sans" font-size="7.6" fill="#555" text-anchor="end" letter-spacing="-0.4">0</text><line x1="534.8" y1="212.00" x2="536.7" y2="212.00" stroke="#bbb" stroke-width="0.7"/><polyline points="537.80,187.27 544.23,187.27 550.66,187.27 557.09,187.27 563.52,187.27 569.95,188.38 576.38,186.38 582.81,186.38 589.24,186.38 595.67,186.38 602.10,186.38 608.53,185.36 614.96,183.14 621.39,183.14 627.82,183.14 634.25,183.14 640.68,177.81 647.11,177.81 653.54,173.15 659.97,173.15 666.40,173.15 672.83,173.15 679.26,173.15 685.69,173.15 692.12,176.48 698.55,176.48 704.98,176.48 711.41,176.48 717.84,176.48 724.27,176.48 730.70,176.48 737.13,176.48 743.56,176.48 749.99,176.48 756.42,176.48 762.85,176.48 769.28,176.48 775.71,176.48 782.14,176.48 788.57,176.48 795.00,176.48 801.43,176.48 807.86,176.48 814.29,178.70 820.72,178.70 827.15,178.70 833.58,178.70 840.01,178.70 846.44,178.70 852.87,177.37 859.30,177.37 865.73,177.37 872.16,177.37 878.59,175.59 885.02,174.48 891.45,174.48 897.88,174.48 904.31,174.48 910.74,168.49 917.17,170.31" fill="none" stroke="#45b2e0" stroke-width="1.1"/><polyline points="537.80,175.33 544.23,175.33 550.66,175.33 557.09,175.33 563.52,175.33 569.95,175.33 576.38,172.26 582.81,172.26 589.24,172.26 595.67,172.26 602.10,172.26 608.53,170.71 614.96,167.73 621.39,167.73 627.82,167.73 634.25,159.61 640.68,159.61 647.11,152.28 653.54,152.28 659.97,152.28 666.40,152.28 672.83,152.28 679.26,152.28 685.69,152.28 692.12,152.28 698.55,157.03 704.98,157.03 711.41,157.03 717.84,157.03 724.27,157.03 730.70,157.03 737.13,157.03 743.56,157.03 749.99,157.03 756.42,157.03 762.85,157.03 769.28,157.03 775.71,157.03 782.14,157.03 788.57,157.03 795.00,157.03 801.43,157.03 807.86,157.03 814.29,157.03 820.72,157.03 827.15,157.03 833.58,157.03 840.01,157.03 846.44,157.03 852.87,157.03 859.30,157.03 865.73,157.03 872.16,153.84 878.59,153.84 885.02,153.84 891.45,153.84 897.88,153.84 904.31,153.84 910.74,149.40 917.17,147.80" fill="none" stroke="#eb7d72" stroke-width="1.1"/><circle cx="537.80" cy="187.27" r="1.6" fill="#45b2e0"/><circle cx="544.23" cy="187.27" r="1.6" fill="#45b2e0"/><circle cx="550.66" cy="187.27" r="1.6" fill="#45b2e0"/><circle cx="557.09" cy="187.27" r="1.6" fill="#45b2e0"/><circle cx="563.52" cy="187.27" r="1.6" fill="#45b2e0"/><circle cx="569.95" cy="188.38" r="1.6" fill="#45b2e0"/><circle cx="576.38" cy="186.38" r="1.6" fill="#45b2e0"/><circle cx="582.81" cy="186.38" r="1.6" fill="#45b2e0"/><circle cx="589.24" cy="186.38" r="1.6" fill="#45b2e0"/><circle cx="595.67" cy="186.38" r="1.6" fill="#45b2e0"/><circle cx="602.10" cy="186.38" r="1.6" fill="#45b2e0"/><circle cx="608.53" cy="185.36" r="1.6" fill="#45b2e0"/><circle cx="614.96" cy="183.14" r="1.6" fill="#45b2e0"/><circle cx="621.39" cy="183.14" r="1.6" fill="#45b2e0"/><circle cx="627.82" cy="183.14" r="1.6" fill="#45b2e0"/><circle cx="634.25" cy="183.14" r="1.6" fill="#45b2e0"/><circle cx="640.68" cy="177.81" r="1.6" fill="#45b2e0"/><circle cx="647.11" cy="177.81" r="1.6" fill="#45b2e0"/><circle cx="653.54" cy="173.15" r="1.6" fill="#45b2e0"/><circle cx="659.97" cy="173.15" r="1.6" fill="#45b2e0"/><circle cx="666.40" cy="173.15" r="1.6" fill="#45b2e0"/><circle cx="672.83" cy="173.15" r="1.6" fill="#45b2e0"/><circle cx="679.26" cy="173.15" r="1.6" fill="#45b2e0"/><circle cx="685.69" cy="173.15" r="1.6" fill="#45b2e0"/><circle cx="692.12" cy="176.48" r="1.6" fill="#45b2e0"/><circle cx="698.55" cy="176.48" r="1.6" fill="#45b2e0"/><circle cx="704.98" cy="176.48" r="1.6" fill="#45b2e0"/><circle cx="711.41" cy="176.48" r="1.6" fill="#45b2e0"/><circle cx="717.84" cy="176.48" r="1.6" fill="#45b2e0"/><circle cx="724.27" cy="176.48" r="1.6" fill="#45b2e0"/><circle cx="730.70" cy="176.48" r="1.6" fill="#45b2e0"/><circle cx="737.13" cy="176.48" r="1.6" fill="#45b2e0"/><circle cx="743.56" cy="176.48" r="1.6" fill="#45b2e0"/><circle cx="749.99" cy="176.48" r="1.6" fill="#45b2e0"/><circle cx="756.42" cy="176.48" r="1.6" fill="#45b2e0"/><circle cx="762.85" cy="176.48" r="1.6" fill="#45b2e0"/><circle cx="769.28" cy="176.48" r="1.6" fill="#45b2e0"/><circle cx="775.71" cy="176.48" r="1.6" fill="#45b2e0"/><circle cx="782.14" cy="176.48" r="1.6" fill="#45b2e0"/><circle cx="788.57" cy="176.48" r="1.6" fill="#45b2e0"/><circle cx="795.00" cy="176.48" r="1.6" fill="#45b2e0"/><circle cx="801.43" cy="176.48" r="1.6" fill="#45b2e0"/><circle cx="807.86" cy="176.48" r="1.6" fill="#45b2e0"/><circle cx="814.29" cy="178.70" r="1.6" fill="#45b2e0"/><circle cx="820.72" cy="178.70" r="1.6" fill="#45b2e0"/><circle cx="827.15" cy="178.70" r="1.6" fill="#45b2e0"/><circle cx="833.58" cy="178.70" r="1.6" fill="#45b2e0"/><circle cx="840.01" cy="178.70" r="1.6" fill="#45b2e0"/><circle cx="846.44" cy="178.70" r="1.6" fill="#45b2e0"/><circle cx="852.87" cy="177.37" r="1.6" fill="#45b2e0"/><circle cx="859.30" cy="177.37" r="1.6" fill="#45b2e0"/><circle cx="865.73" cy="177.37" r="1.6" fill="#45b2e0"/><circle cx="872.16" cy="177.37" r="1.6" fill="#45b2e0"/><circle cx="878.59" cy="175.59" r="1.6" fill="#45b2e0"/><circle cx="885.02" cy="174.48" r="1.6" fill="#45b2e0"/><circle cx="891.45" cy="174.48" r="1.6" fill="#45b2e0"/><circle cx="897.88" cy="174.48" r="1.6" fill="#45b2e0"/><circle cx="904.31" cy="174.48" r="1.6" fill="#45b2e0"/><circle cx="910.74" cy="168.49" r="1.6" fill="#45b2e0"/><circle cx="917.17" cy="170.31" r="1.6" fill="#45b2e0"/><defs><clipPath id="pc"><rect x="530" y="140" width="388.6" height="80"/></clipPath></defs><g clip-path="url(#pc)"><rect x="535.70" y="173.23" width="4.2" height="4.2" fill="#eb7d72"/><rect x="542.13" y="173.23" width="4.2" height="4.2" fill="#eb7d72"/><rect x="548.56" y="173.23" width="4.2" height="4.2" fill="#eb7d72"/><rect x="554.99" y="173.23" width="4.2" height="4.2" fill="#eb7d72"/><rect x="561.42" y="173.23" width="4.2" height="4.2" fill="#eb7d72"/><rect x="567.85" y="173.23" width="4.2" height="4.2" fill="#eb7d72"/><rect x="574.28" y="170.16" width="4.2" height="4.2" fill="#eb7d72"/><rect x="580.71" y="170.16" width="4.2" height="4.2" fill="#eb7d72"/><rect x="587.14" y="170.16" width="4.2" height="4.2" fill="#eb7d72"/><rect x="593.57" y="170.16" width="4.2" height="4.2" fill="#eb7d72"/><rect x="600.00" y="170.16" width="4.2" height="4.2" fill="#eb7d72"/><rect x="606.43" y="168.61" width="4.2" height="4.2" fill="#eb7d72"/><rect x="612.86" y="165.63" width="4.2" height="4.2" fill="#eb7d72"/><rect x="619.29" y="165.63" width="4.2" height="4.2" fill="#eb7d72"/><rect x="625.72" y="165.63" width="4.2" height="4.2" fill="#eb7d72"/><rect x="632.15" y="157.51" width="4.2" height="4.2" fill="#eb7d72"/><rect x="638.58" y="157.51" width="4.2" height="4.2" fill="#eb7d72"/><rect x="645.01" y="150.18" width="4.2" height="4.2" fill="#eb7d72"/><rect x="651.44" y="150.18" width="4.2" height="4.2" fill="#eb7d72"/><rect x="657.87" y="150.18" width="4.2" height="4.2" fill="#eb7d72"/><rect x="664.30" y="150.18" width="4.2" height="4.2" fill="#eb7d72"/><rect x="670.73" y="150.18" width="4.2" height="4.2" fill="#eb7d72"/><rect x="677.16" y="150.18" width="4.2" height="4.2" fill="#eb7d72"/><rect x="683.59" y="150.18" width="4.2" height="4.2" fill="#eb7d72"/><rect x="690.02" y="150.18" width="4.2" height="4.2" fill="#eb7d72"/><rect x="696.45" y="154.93" width="4.2" height="4.2" fill="#eb7d72"/><rect x="702.88" y="154.93" width="4.2" height="4.2" fill="#eb7d72"/><rect x="709.31" y="154.93" width="4.2" height="4.2" fill="#eb7d72"/><rect x="715.74" y="154.93" width="4.2" height="4.2" fill="#eb7d72"/><rect x="722.17" y="154.93" width="4.2" height="4.2" fill="#eb7d72"/><rect x="728.60" y="154.93" width="4.2" height="4.2" fill="#eb7d72"/><rect x="735.03" y="154.93" width="4.2" height="4.2" fill="#eb7d72"/><rect x="741.46" y="154.93" width="4.2" height="4.2" fill="#eb7d72"/><rect x="747.89" y="154.93" width="4.2" height="4.2" fill="#eb7d72"/><rect x="754.32" y="154.93" width="4.2" height="4.2" fill="#eb7d72"/><rect x="760.75" y="154.93" width="4.2" height="4.2" fill="#eb7d72"/><rect x="767.18" y="154.93" width="4.2" height="4.2" fill="#eb7d72"/><rect x="773.61" y="154.93" width="4.2" height="4.2" fill="#eb7d72"/><rect x="780.04" y="154.93" width="4.2" height="4.2" fill="#eb7d72"/><rect x="786.47" y="154.93" width="4.2" height="4.2" fill="#eb7d72"/><rect x="792.90" y="154.93" width="4.2" height="4.2" fill="#eb7d72"/><rect x="799.33" y="154.93" width="4.2" height="4.2" fill="#eb7d72"/><rect x="805.76" y="154.93" width="4.2" height="4.2" fill="#eb7d72"/><rect x="812.19" y="154.93" width="4.2" height="4.2" fill="#eb7d72"/><rect x="818.62" y="154.93" width="4.2" height="4.2" fill="#eb7d72"/><rect x="825.05" y="154.93" width="4.2" height="4.2" fill="#eb7d72"/><rect x="831.48" y="154.93" width="4.2" height="4.2" fill="#eb7d72"/><rect x="837.91" y="154.93" width="4.2" height="4.2" fill="#eb7d72"/><rect x="844.34" y="154.93" width="4.2" height="4.2" fill="#eb7d72"/><rect x="850.77" y="154.93" width="4.2" height="4.2" fill="#eb7d72"/><rect x="857.20" y="154.93" width="4.2" height="4.2" fill="#eb7d72"/><rect x="863.63" y="154.93" width="4.2" height="4.2" fill="#eb7d72"/><rect x="870.06" y="151.74" width="4.2" height="4.2" fill="#eb7d72"/><rect x="876.49" y="151.74" width="4.2" height="4.2" fill="#eb7d72"/><rect x="882.92" y="151.74" width="4.2" height="4.2" fill="#eb7d72"/><rect x="889.35" y="151.74" width="4.2" height="4.2" fill="#eb7d72"/><rect x="895.78" y="151.74" width="4.2" height="4.2" fill="#eb7d72"/><rect x="902.21" y="151.74" width="4.2" height="4.2" fill="#eb7d72"/><rect x="908.64" y="147.30" width="4.2" height="4.2" fill="#eb7d72"/><rect x="915.07" y="145.70" width="4.2" height="4.2" fill="#eb7d72"/></g><line x1="537.80" y1="212" x2="537.80" y2="214" stroke="#bbb" stroke-width="0.7"/><text transform="translate(540.40,215.2) rotate(-90) scale(0.8,1)" x="0" y="0" font-family="Liberation Sans" font-size="7.8" fill="#555" text-anchor="end">9.03.19</text><line x1="550.66" y1="212" x2="550.66" y2="214" stroke="#bbb" stroke-width="0.7"/><text transform="translate(553.26,215.2) rotate(-90) scale(0.8,1)" x="0" y="0" font-family="Liberation Sans" font-size="7.8" fill="#555" text-anchor="end">9.09.19</text><line x1="563.52" y1="212" x2="563.52" y2="214" stroke="#bbb" stroke-width="0.7"/><text transform="translate(566.12,215.2) rotate(-90) scale(0.8,1)" x="0" y="0" font-family="Liberation Sans" font-size="7.8" fill="#555" text-anchor="end">5.12.19</text><line x1="576.38" y1="212" x2="576.38" y2="214" stroke="#bbb" stroke-width="0.7"/><text transform="translate(578.98,215.2) rotate(-90) scale(0.8,1)" x="0" y="0" font-family="Liberation Sans" font-size="7.8" fill="#555" text-anchor="end">5.05.20</text><line x1="589.24" y1="212" x2="589.24" y2="214" stroke="#bbb" stroke-width="0.7"/><text transform="translate(591.84,215.2) rotate(-90) scale(0.8,1)" x="0" y="0" font-family="Liberation Sans" font-size="7.8" fill="#555" text-anchor="end">0.11.20</text><line x1="602.10" y1="212" x2="602.10" y2="214" stroke="#bbb" stroke-width="0.7"/><text transform="translate(604.70,215.2) rotate(-90) scale(0.8,1)" x="0" y="0" font-family="Liberation Sans" font-size="7.8" fill="#555" text-anchor="end">8.11.20</text><line x1="614.96" y1="212" x2="614.96" y2="214" stroke="#bbb" stroke-width="0.7"/><text transform="translate(617.56,215.2) rotate(-90) scale(0.8,1)" x="0" y="0" font-family="Liberation Sans" font-size="7.8" fill="#555" text-anchor="end">1.09.21</text><line x1="627.82" y1="212" x2="627.82" y2="214" stroke="#bbb" stroke-width="0.7"/><text transform="translate(630.42,215.2) rotate(-90) scale(0.8,1)" x="0" y="0" font-family="Liberation Sans" font-size="7.8" fill="#555" text-anchor="end">6.11.21</text><line x1="640.68" y1="212" x2="640.68" y2="214" stroke="#bbb" stroke-width="0.7"/><text transform="translate(643.28,215.2) rotate(-90) scale(0.8,1)" x="0" y="0" font-family="Liberation Sans" font-size="7.8" fill="#555" text-anchor="end">1.02.22</text><line x1="653.54" y1="212" x2="653.54" y2="214" stroke="#bbb" stroke-width="0.7"/><text transform="translate(656.14,215.2) rotate(-90) scale(0.8,1)" x="0" y="0" font-family="Liberation Sans" font-size="7.8" fill="#555" text-anchor="end">8.03.22</text><line x1="666.40" y1="212" x2="666.40" y2="214" stroke="#bbb" stroke-width="0.7"/><text transform="translate(669.00,215.2) rotate(-90) scale(0.8,1)" x="0" y="0" font-family="Liberation Sans" font-size="7.8" fill="#555" text-anchor="end">3.05.22</text><line x1="679.26" y1="212" x2="679.26" y2="214" stroke="#bbb" stroke-width="0.7"/><text transform="translate(681.86,215.2) rotate(-90) scale(0.8,1)" x="0" y="0" font-family="Liberation Sans" font-size="7.8" fill="#555" text-anchor="end">6.06.22</text><line x1="692.12" y1="212" x2="692.12" y2="214" stroke="#bbb" stroke-width="0.7"/><text transform="translate(694.72,215.2) rotate(-90) scale(0.8,1)" x="0" y="0" font-family="Liberation Sans" font-size="7.8" fill="#555" text-anchor="end">8.07.22</text><line x1="704.98" y1="212" x2="704.98" y2="214" stroke="#bbb" stroke-width="0.7"/><text transform="translate(707.58,215.2) rotate(-90) scale(0.8,1)" x="0" y="0" font-family="Liberation Sans" font-size="7.8" fill="#555" text-anchor="end">8.08.22</text><line x1="717.84" y1="212" x2="717.84" y2="214" stroke="#bbb" stroke-width="0.7"/><text transform="translate(720.44,215.2) rotate(-90) scale(0.8,1)" x="0" y="0" font-family="Liberation Sans" font-size="7.8" fill="#555" text-anchor="end">0.10.22</text><line x1="730.70" y1="212" x2="730.70" y2="214" stroke="#bbb" stroke-width="0.7"/><text transform="translate(733.30,215.2) rotate(-90) scale(0.8,1)" x="0" y="0" font-family="Liberation Sans" font-size="7.8" fill="#555" text-anchor="end">3.11.22</text><line x1="743.56" y1="212" x2="743.56" y2="214" stroke="#bbb" stroke-width="0.7"/><text transform="translate(746.16,215.2) rotate(-90) scale(0.8,1)" x="0" y="0" font-family="Liberation Sans" font-size="7.8" fill="#555" text-anchor="end">1.11.22</text><line x1="756.42" y1="212" x2="756.42" y2="214" stroke="#bbb" stroke-width="0.7"/><text transform="translate(759.02,215.2) rotate(-90) scale(0.8,1)" x="0" y="0" font-family="Liberation Sans" font-size="7.8" fill="#555" text-anchor="end">1.11.22</text><line x1="769.28" y1="212" x2="769.28" y2="214" stroke="#bbb" stroke-width="0.7"/><text transform="translate(771.88,215.2) rotate(-90) scale(0.8,1)" x="0" y="0" font-family="Liberation Sans" font-size="7.8" fill="#555" text-anchor="end">6.12.22</text><line x1="782.14" y1="212" x2="782.14" y2="214" stroke="#bbb" stroke-width="0.7"/><text transform="translate(784.74,215.2) rotate(-90) scale(0.8,1)" x="0" y="0" font-family="Liberation Sans" font-size="7.8" fill="#555" text-anchor="end">1.12.22</text><line x1="795.00" y1="212" x2="795.00" y2="214" stroke="#bbb" stroke-width="0.7"/><text transform="translate(797.60,215.2) rotate(-90) scale(0.8,1)" x="0" y="0" font-family="Liberation Sans" font-size="7.8" fill="#555" text-anchor="end">8.02.23</text><line x1="807.86" y1="212" x2="807.86" y2="214" stroke="#bbb" stroke-width="0.7"/><text transform="translate(810.46,215.2) rotate(-90) scale(0.8,1)" x="0" y="0" font-family="Liberation Sans" font-size="7.8" fill="#555" text-anchor="end">7.05.23</text><line x1="820.72" y1="212" x2="820.72" y2="214" stroke="#bbb" stroke-width="0.7"/><text transform="translate(823.32,215.2) rotate(-90) scale(0.8,1)" x="0" y="0" font-family="Liberation Sans" font-size="7.8" fill="#555" text-anchor="end">2.07.23</text><line x1="833.58" y1="212" x2="833.58" y2="214" stroke="#bbb" stroke-width="0.7"/><text transform="translate(836.18,215.2) rotate(-90) scale(0.8,1)" x="0" y="0" font-family="Liberation Sans" font-size="7.8" fill="#555" text-anchor="end">8.11.23</text><line x1="846.44" y1="212" x2="846.44" y2="214" stroke="#bbb" stroke-width="0.7"/><text transform="translate(849.04,215.2) rotate(-90) scale(0.8,1)" x="0" y="0" font-family="Liberation Sans" font-size="7.8" fill="#555" text-anchor="end">0.12.23</text><line x1="859.30" y1="212" x2="859.30" y2="214" stroke="#bbb" stroke-width="0.7"/><text transform="translate(861.90,215.2) rotate(-90) scale(0.8,1)" x="0" y="0" font-family="Liberation Sans" font-size="7.8" fill="#555" text-anchor="end">6.12.23</text><line x1="872.16" y1="212" x2="872.16" y2="214" stroke="#bbb" stroke-width="0.7"/><text transform="translate(874.76,215.2) rotate(-90) scale(0.8,1)" x="0" y="0" font-family="Liberation Sans" font-size="7.8" fill="#555" text-anchor="end">1.04.24</text><line x1="885.02" y1="212" x2="885.02" y2="214" stroke="#bbb" stroke-width="0.7"/><text transform="translate(887.62,215.2) rotate(-90) scale(0.8,1)" x="0" y="0" font-family="Liberation Sans" font-size="7.8" fill="#555" text-anchor="end">2.05.24</text><line x1="897.88" y1="212" x2="897.88" y2="214" stroke="#bbb" stroke-width="0.7"/><text transform="translate(900.48,215.2) rotate(-90) scale(0.8,1)" x="0" y="0" font-family="Liberation Sans" font-size="7.8" fill="#555" text-anchor="end">5.12.24</text><line x1="910.74" y1="212" x2="910.74" y2="214" stroke="#bbb" stroke-width="0.7"/><text transform="translate(913.34,215.2) rotate(-90) scale(0.8,1)" x="0" y="0" font-family="Liberation Sans" font-size="7.8" fill="#555" text-anchor="end">0.01.25</text><line x1="918.7" y1="169.6" x2="933" y2="169.6" stroke="#45b2e0" stroke-width="1.1"/><circle cx="926" cy="169.6" r="1.7" fill="#45b2e0"/><text transform="translate(934.4,172.4) scale(0.73,1)" font-family="Liberation Sans" font-size="8.2" fill="#555">Закупочная</text><line x1="918.7" y1="215.2" x2="933" y2="215.2" stroke="#eb7d72" stroke-width="1.1"/><rect x="923.8" y="213" width="4.4" height="4.4" fill="#eb7d72"/><text transform="translate(934.4,218) scale(0.73,1)" font-family="Liberation Sans" font-size="8.2" fill="#555">Розничная</text></svg>
<div class="t" style="left:133.60px;top:244.80px;font-size:9.85px;color:#44a270;font-weight:400;letter-spacing:0.00px;transform:scaleX(0.84);transform-origin:0 50%;">Заполните данные для создания заказов</div>
<div class="t" style="left:133.60px;top:257.80px;font-size:8.2px;color:#5a5a5a;font-weight:400;letter-spacing:0.00px;transform:scaleX(0.84);transform-origin:0 50%;">Организация для новых заказов:</div>
<div style="left:241.40px;top:261.50px;width:218.60px;height:13.00px;box-sizing:border-box;border:1px solid #d9d9d9;border-radius:2px;background:#fff;box-shadow:inset 0 1px 1px rgba(0,0,0,0.05);"></div>
<div style="left:240.80px;top:263.50px;width:2.50px;height:9.00px;background:#fff;"></div>
<div style="left:276.00px;top:273.00px;width:37.00px;height:2.50px;background:#fff;"></div>
<div style="left:288.50px;top:269.20px;width:1.00px;height:0.90px;background:#999;"></div>
<div style="left:292.00px;top:269.20px;width:1.00px;height:0.90px;background:#999;"></div>
<div style="left:296.00px;top:269.00px;width:3.50px;height:1.20px;background:#777;"></div>
<div style="left:438.00px;top:262.00px;width:0.80px;height:12.00px;background:#e0e0e0;"></div>
<div style="left:448.60px;top:262.00px;width:0.80px;height:12.00px;background:#e0e0e0;"></div>
<svg style="position:absolute;left:441.00px;top:266.00px;" width="5" height="4" viewBox="0 0 5 4"><path d="M0.5 0.8 L4.1 0.8 L2.3 3 Z" fill="#666"/></svg>
<svg style="position:absolute;left:450.50px;top:264.00px;" width="8" height="8" viewBox="0 0 8 8"><rect x="1" y="2.8" width="3.8" height="3.8" fill="none" stroke="#777" stroke-width="0.8"/><path d="M3.2 2.8 L3.2 1 L7 1 L7 4.8 L4.8 4.8" fill="none" stroke="#777" stroke-width="0.8"/></svg>
<div class="t" style="left:466.00px;top:257.80px;font-size:8.2px;color:#5a5a5a;font-weight:400;letter-spacing:0.00px;transform:scaleX(0.84);transform-origin:0 50%;">Склад для новых заказов:</div>
<div style="left:553.00px;top:261.50px;width:218.20px;height:13.00px;box-sizing:border-box;border:1px solid #d9d9d9;border-radius:2px;background:#fff;box-shadow:inset 0 1px 1px rgba(0,0,0,0.05);"></div>
<div style="left:750.40px;top:262.00px;width:0.80px;height:12.00px;background:#e0e0e0;"></div>
<div style="left:760.20px;top:262.00px;width:0.80px;height:12.00px;background:#e0e0e0;"></div>
<div class="t" style="left:555.80px;top:257.80px;font-size:8.2px;color:#4a4a4a;font-weight:400;letter-spacing:0.00px;transform:scaleX(0.84);transform-origin:0 50%;">С</div>
<div class="t" style="left:572.00px;top:258.40px;font-size:7.4px;color:#999;font-weight:400;letter-spacing:0.00px;transform:scaleX(0.84);transform-origin:0 50%;">   ,лами с бер...</div>
<svg style="position:absolute;left:753.30px;top:266.00px;" width="5" height="4" viewBox="0 0 5 4"><path d="M0.5 0.8 L4.1 0.8 L2.3 3 Z" fill="#666"/></svg>
<svg style="position:absolute;left:762.00px;top:264.00px;" width="8" height="8" viewBox="0 0 8 8"><rect x="1" y="2.8" width="3.8" height="3.8" fill="none" stroke="#777" stroke-width="0.8"/><path d="M3.2 2.8 L3.2 1 L7 1 L7 4.8 L4.8 4.8" fill="none" stroke="#777" stroke-width="0.8"/></svg>
<div style="left:133.60px;top:283.80px;width:31.70px;height:13.20px;box-sizing:border-box;border:1px solid #d2d2d2;border-radius:2px;background:linear-gradient(#ffffff,#f0f0f0);box-shadow:0 1px 1px rgba(0,0,0,0.12);"></div>
<div style="left:149.50px;top:284.30px;width:0.80px;height:12.20px;background:#d8d8d8;"></div>
<svg style="position:absolute;left:137.50px;top:286.50px;" width="8" height="8" viewBox="0 0 8 8"><path d="M3.6 0.6 L6.8 3.8 L4.8 3.8 L4.8 6.8 L2.4 6.8 L2.4 3.8 L0.4 3.8 Z" fill="#3a93d0"/></svg>
<svg style="position:absolute;left:153.00px;top:286.50px;" width="8" height="8" viewBox="0 0 8 8"><path d="M3.6 6.8 L6.8 3.6 L4.8 3.6 L4.8 0.6 L2.4 0.6 L2.4 3.6 L0.4 3.6 Z" fill="#3a93d0"/></svg>
<div style="left:176.20px;top:283.80px;width:15.70px;height:13.20px;box-sizing:border-box;border:1px solid #d2d2d2;border-radius:2px;background:linear-gradient(#ffffff,#f0f0f0);box-shadow:0 1px 1px rgba(0,0,0,0.12);"></div>
<svg style="position:absolute;left:179.00px;top:285.50px;" width="10" height="10" viewBox="0 0 10 10"><path d="M2.8 1.5 L9.2 1.5 L7.2 8.8 L0.8 8.8 Z" fill="#6cb86a" stroke="#4a8a50" stroke-width="0.6"/><path d="M2.6 5.2 L4.2 7 L8 2.6" fill="none" stroke="#e8f5e0" stroke-width="1.1"/></svg>
<div style="left:197.20px;top:283.80px;width:15.30px;height:13.20px;box-sizing:border-box;border:1px solid #d2d2d2;border-radius:2px;background:linear-gradient(#ffffff,#f0f0f0);box-shadow:0 1px 1px rgba(0,0,0,0.12);"></div>
<svg style="position:absolute;left:200.20px;top:286.00px;" width="10" height="9" viewBox="0 0 10 9"><rect x="1" y="2.8" width="5.4" height="5.4" fill="#fff" stroke="#8a8a8a" stroke-width="0.9"/><path d="M1 2.8 L3 0.9 L8.6 0.9 L8.6 6.4 L6.4 8.2" fill="none" stroke="#8a8a8a" stroke-width="0.9"/></svg>
<div style="left:218.00px;top:283.80px;width:128.30px;height:13.20px;box-sizing:border-box;border:1px solid #d2d2d2;border-radius:2px;background:linear-gradient(#f4f4f4,#e4e4e4);box-shadow:0 1px 1px rgba(0,0,0,0.12);"></div>
<div class="t" style="left:224.60px;top:280.50px;font-size:8.2px;color:#4a4a4a;font-weight:400;letter-spacing:0.00px;transform:scaleX(0.84);transform-origin:0 50%;">Создать новые Заказы поставщику</div>
<div style="left:351.30px;top:283.80px;width:175.70px;height:13.20px;box-sizing:border-box;border:1px solid #d2d2d2;border-radius:2px;background:linear-gradient(#ffffff,#f0f0f0);box-shadow:0 1px 1px rgba(0,0,0,0.12);"></div>
<div class="t" style="left:358.00px;top:280.50px;font-size:8.2px;color:#4a4a4a;font-weight:400;letter-spacing:0.00px;transform:scaleX(0.84);transform-origin:0 50%;">Создать один заказ (без разбивки по поставщику)</div>
<div style="left:832.50px;top:284.00px;width:137.70px;height:13.00px;box-sizing:border-box;border:1px solid #d9d9d9;border-radius:2px;background:#fff;box-shadow:inset 0 1px 1px rgba(0,0,0,0.05);"></div>
<div style="left:959.40px;top:284.50px;width:0.80px;height:12.00px;background:#e0e0e0;"></div>
<div class="t" style="left:835.30px;top:280.50px;font-size:8.2px;color:#c8c8c8;font-weight:400;letter-spacing:0.00px;transform:scaleX(0.84);transform-origin:0 50%;">Поиск (Ctrl+F)</div>
<svg style="position:absolute;left:962.50px;top:288.00px;" width="5" height="5" viewBox="0 0 5 5"><path d="M0.6 0.6 L4.2 4.2 M4.2 0.6 L0.6 4.2" stroke="#777" stroke-width="0.8"/></svg>
<div style="left:976.20px;top:284.00px;width:31.80px;height:13.00px;box-sizing:border-box;border:1px solid #d2d2d2;border-radius:2px;background:linear-gradient(#ffffff,#f0f0f0);box-shadow:0 1px 1px rgba(0,0,0,0.12);"></div>
<div class="t" style="left:983.20px;top:280.90px;font-size:8.2px;color:#5a5a5a;font-weight:400;letter-spacing:0.00px;transform:scaleX(0.9);transform-origin:0 50%;">Еще</div>
<svg style="position:absolute;left:1000.50px;top:289.40px;" width="5" height="4" viewBox="0 0 5 4"><path d="M0.5 0.8 L4.1 0.8 L2.3 3 Z" fill="#555"/></svg>
<div style="left:133.10px;top:302.50px;width:875.50px;height:239.40px;box-sizing:border-box;border:1px solid #d2d2d2;background:#fff;"></div>
<div style="left:134.10px;top:303.50px;width:866.20px;height:15.30px;background:#f2f2f2;"></div>
<div style="left:168.80px;top:303.50px;width:0.80px;height:15.30px;background:#fbfbfb;"></div>
<div style="left:194.10px;top:303.50px;width:0.80px;height:15.30px;background:#fbfbfb;"></div>
<div style="left:246.20px;top:303.50px;width:0.80px;height:15.30px;background:#fbfbfb;"></div>
<div style="left:276.20px;top:303.50px;width:0.80px;height:15.30px;background:#fbfbfb;"></div>
<div style="left:365.70px;top:303.50px;width:0.80px;height:15.30px;background:#fbfbfb;"></div>
<div style="left:466.00px;top:303.50px;width:0.80px;height:15.30px;background:#fbfbfb;"></div>
<div style="left:553.20px;top:303.50px;width:0.80px;height:15.30px;background:#fbfbfb;"></div>
<div style="left:613.00px;top:303.50px;width:0.80px;height:15.30px;background:#fbfbfb;"></div>
<div style="left:650.10px;top:303.50px;width:0.80px;height:15.30px;background:#fbfbfb;"></div>
<div style="left:691.20px;top:303.50px;width:0.80px;height:15.30px;background:#fbfbfb;"></div>
<div style="left:739.10px;top:303.50px;width:0.80px;height:15.30px;background:#fbfbfb;"></div>
<div style="left:789.90px;top:303.50px;width:0.80px;height:15.30px;background:#fbfbfb;"></div>
<div style="left:880.00px;top:303.50px;width:0.80px;height:15.30px;background:#fbfbfb;"></div>
<div style="left:932.00px;top:303.50px;width:0.80px;height:15.30px;background:#fbfbfb;"></div>
<div class="t" style="left:137.80px;top:301.20px;font-size:8.2px;color:#5a5a5a;font-weight:400;letter-spacing:0.00px;transform:scaleX(0.84);transform-origin:0 50%;">Пометка</div>
<div class="t" style="left:174.50px;top:301.20px;font-size:8.2px;color:#5a5a5a;font-weight:400;letter-spacing:0.00px;transform:scaleX(0.84);transform-origin:0 50%;">N</div>
<div class="t" style="left:199.60px;top:301.20px;font-size:8.2px;color:#5a5a5a;font-weight:400;letter-spacing:0.00px;transform:scaleX(0.84);transform-origin:0 50%;">Класс</div>
<div class="t" style="left:251.00px;top:301.20px;font-size:8.2px;color:#5a5a5a;font-weight:400;letter-spacing:0.00px;transform:scaleX(0.84);transform-origin:0 50%;">%</div>
<div class="t" style="left:281.30px;top:301.20px;font-size:8.2px;color:#5a5a5a;font-weight:400;letter-spacing:0.00px;transform:scaleX(0.84);transform-origin:0 50%;">Номенклатура</div>
<div class="t" style="left:370.20px;top:301.20px;font-size:8.2px;color:#5a5a5a;font-weight:400;letter-spacing:0.00px;transform:scaleX(0.84);transform-origin:0 50%;">Стратегический ассортимент</div>
<div class="t" style="left:470.80px;top:301.20px;font-size:8.2px;color:#5a5a5a;font-weight:400;letter-spacing:0.00px;transform:scaleX(0.84);transform-origin:0 50%;">Кол. продаж(в ед. хран)</div>
<div class="t" style="left:557.80px;top:301.20px;font-size:8.2px;color:#5a5a5a;font-weight:400;letter-spacing:0.00px;transform:scaleX(0.84);transform-origin:0 50%;">Сумма выручки</div>
<div class="t" style="left:617.50px;top:301.20px;font-size:8.2px;color:#5a5a5a;font-weight:400;letter-spacing:0.00px;transform:scaleX(0.84);transform-origin:0 50%;">Прибыль</div>
<div class="t" style="left:655.00px;top:301.20px;font-size:8.2px;color:#5a5a5a;font-weight:400;letter-spacing:0.00px;transform:scaleX(0.84);transform-origin:0 50%;">Приб-ость</div>
<div class="t" style="left:695.80px;top:301.20px;font-size:8.2px;color:#5a5a5a;font-weight:400;letter-spacing:0.00px;transform:scaleX(0.84);transform-origin:0 50%;">Кол. остаток</div>
<div class="t" style="left:743.50px;top:301.20px;font-size:8.2px;color:#5a5a5a;font-weight:400;letter-spacing:0.00px;transform:scaleX(0.84);transform-origin:0 50%;">Период дней</div>
<div class="t" style="left:795.00px;top:301.20px;font-size:8.2px;color:#5a5a5a;font-weight:400;letter-spacing:0.00px;transform:scaleX(0.84);transform-origin:0 50%;">Средние продажи в день</div>
<div class="t" style="left:884.80px;top:301.20px;font-size:8.2px;color:#5a5a5a;font-weight:400;letter-spacing:0.00px;transform:scaleX(0.84);transform-origin:0 50%;">Остаток дней</div>
<div class="t" style="left:936.80px;top:301.20px;font-size:8.2px;color:#5a5a5a;font-weight:400;letter-spacing:0.00px;transform:scaleX(0.84);transform-origin:0 50%;">Товары в пути</div>
<div style="left:133.90px;top:318.80px;width:35.30px;height:15.42px;background:#fdf8e0;"></div>
<div style="left:194.80px;top:319.10px;width:51.80px;height:14.62px;background:#fe0000;"></div>
<div style="left:880.80px;top:319.10px;width:51.60px;height:14.62px;background:#fe0000;"></div>
<div style="left:194.10px;top:319.30px;width:0.80px;height:14.42px;background:rgba(255,255,255,0.35);"></div>
<div style="left:246.20px;top:319.30px;width:0.80px;height:14.42px;background:rgba(255,255,255,0.35);"></div>
<div style="left:276.20px;top:319.30px;width:0.80px;height:14.42px;background:rgba(255,255,255,0.35);"></div>
<div style="left:365.70px;top:319.30px;width:0.80px;height:14.42px;background:rgba(255,255,255,0.35);"></div>
<div style="left:466.00px;top:319.30px;width:0.80px;height:14.42px;background:rgba(255,255,255,0.35);"></div>
<div style="left:553.20px;top:319.30px;width:0.80px;height:14.42px;background:rgba(255,255,255,0.35);"></div>
<div style="left:613.00px;top:319.30px;width:0.80px;height:14.42px;background:rgba(255,255,255,0.35);"></div>
<div style="left:650.10px;top:319.30px;width:0.80px;height:14.42px;background:rgba(255,255,255,0.35);"></div>
<div style="left:691.20px;top:319.30px;width:0.80px;height:14.42px;background:rgba(255,255,255,0.35);"></div>
<div style="left:739.10px;top:319.30px;width:0.80px;height:14.42px;background:rgba(255,255,255,0.35);"></div>
<div style="left:789.90px;top:319.30px;width:0.80px;height:14.42px;background:rgba(255,255,255,0.35);"></div>
<div style="left:880.00px;top:319.30px;width:0.80px;height:14.42px;background:rgba(255,255,255,0.35);"></div>
<div style="left:932.00px;top:319.30px;width:0.80px;height:14.42px;background:rgba(255,255,255,0.35);"></div>
<svg style="position:absolute;left:138.00px;top:321.70px;" width="10" height="10" viewBox="0 0 10 10"><rect x="0.6" y="0.6" width="8.2" height="8.2" rx="0.8" fill="#fff" stroke="#c4c4c4" stroke-width="0.9"/><path d="M1.8 4.6 L3.9 6.9 L8.6 1.2" fill="none" stroke="#2a9c58" stroke-width="1.5"/></svg>
<div class="t" style="left:-210.60px;width:400px;text-align:right;top:317.41px;font-size:8.2px;color:#555;font-weight:400;letter-spacing:0.00px;transform:scaleX(0.84);transform-origin:100% 50%;">1</div>
<div class="t" style="left:199.60px;top:317.41px;font-size:8.2px;color:#a30000;font-weight:400;letter-spacing:0.00px;transform:scaleX(0.84);transform-origin:0 50%;">А (80%)</div>
<div class="t" style="left:-127.80px;width:400px;text-align:right;top:317.41px;font-size:8.2px;color:#484848;font-weight:400;letter-spacing:0.00px;transform:scaleX(0.84);transform-origin:100% 50%;">12,01</div>
<div class="t" style="left:281.30px;top:317.41px;font-size:8.2px;color:#484848;font-weight:400;letter-spacing:0.00px;transform:scaleX(0.84);transform-origin:0 50%;">120067 Полотенце бум...</div>
<svg style="position:absolute;left:372.00px;top:322.00px;" width="10" height="9" viewBox="0 0 10 9"><path d="M1 4.3 L3.2 6.6 L7.8 1.0" fill="none" stroke="#2a9c58" stroke-width="1.7"/></svg>
<div class="t" style="left:148.40px;width:400px;text-align:right;top:317.41px;font-size:8.2px;color:#484848;font-weight:400;letter-spacing:0.00px;transform:scaleX(0.84);transform-origin:100% 50%;">15 942,0</div>
<div class="t" style="left:208.20px;width:400px;text-align:right;top:317.41px;font-size:8.2px;color:#484848;font-weight:400;letter-spacing:0.00px;transform:scaleX(0.84);transform-origin:100% 50%;">8 049 788,31</div>
<div class="t" style="left:617.50px;top:317.41px;font-size:8.2px;color:#484848;font-weight:400;letter-spacing:0.00px;transform:scaleX(0.84);transform-origin:0 50%;">1 479 ...</div>
<div class="t" style="left:286.80px;width:400px;text-align:right;top:317.41px;font-size:8.2px;color:#484848;font-weight:400;letter-spacing:0.00px;transform:scaleX(0.84);transform-origin:100% 50%;">22,51</div>
<div class="t" style="left:335.30px;width:400px;text-align:right;top:317.41px;font-size:8.2px;color:#484848;font-weight:400;letter-spacing:0.00px;transform:scaleX(0.84);transform-origin:100% 50%;">1 050,0</div>
<div class="t" style="left:386.00px;width:400px;text-align:right;top:317.41px;font-size:8.2px;color:#484848;font-weight:400;letter-spacing:0.00px;transform:scaleX(0.84);transform-origin:100% 50%;">212</div>
<div class="t" style="left:476.20px;width:400px;text-align:right;top:317.41px;font-size:8.2px;color:#484848;font-weight:400;letter-spacing:0.00px;transform:scaleX(0.84);transform-origin:100% 50%;">75,20</div>
<div class="t" style="left:528.00px;width:400px;text-align:right;top:317.41px;font-size:8.2px;color:#a30000;font-weight:400;letter-spacing:0.00px;transform:scaleX(0.84);transform-origin:100% 50%;">14</div>
<div style="left:133.90px;top:334.22px;width:35.30px;height:15.42px;background:#fff;"></div>
<div style="left:169.20px;top:334.22px;width:25.30px;height:15.42px;background:#fbeab4;"></div>
<div style="left:194.80px;top:334.52px;width:805.40px;height:14.62px;background:#fdbdbd;"></div>
<div style="left:133.90px;top:333.72px;width:60.60px;height:0.80px;background:#efefef;"></div>
<div style="left:194.50px;top:333.62px;width:805.70px;height:1.00px;background:#f0f0f0;"></div>
<div style="left:194.10px;top:334.72px;width:0.80px;height:14.42px;background:rgba(255,255,255,0.35);"></div>
<div style="left:246.20px;top:334.72px;width:0.80px;height:14.42px;background:rgba(255,255,255,0.35);"></div>
<div style="left:276.20px;top:334.72px;width:0.80px;height:14.42px;background:rgba(255,255,255,0.35);"></div>
<div style="left:365.70px;top:334.72px;width:0.80px;height:14.42px;background:rgba(255,255,255,0.35);"></div>
<div style="left:466.00px;top:334.72px;width:0.80px;height:14.42px;background:rgba(255,255,255,0.35);"></div>
<div style="left:553.20px;top:334.72px;width:0.80px;height:14.42px;background:rgba(255,255,255,0.35);"></div>
<div style="left:613.00px;top:334.72px;width:0.80px;height:14.42px;background:rgba(255,255,255,0.35);"></div>
<div style="left:650.10px;top:334.72px;width:0.80px;height:14.42px;background:rgba(255,255,255,0.35);"></div>
<div style="left:691.20px;top:334.72px;width:0.80px;height:14.42px;background:rgba(255,255,255,0.35);"></div>
<div style="left:739.10px;top:334.72px;width:0.80px;height:14.42px;background:rgba(255,255,255,0.35);"></div>
<div style="left:789.90px;top:334.72px;width:0.80px;height:14.42px;background:rgba(255,255,255,0.35);"></div>
<div style="left:880.00px;top:334.72px;width:0.80px;height:14.42px;background:rgba(255,255,255,0.35);"></div>
<div style="left:932.00px;top:334.72px;width:0.80px;height:14.42px;background:rgba(255,255,255,0.35);"></div>
<svg style="position:absolute;left:138.00px;top:337.12px;" width="10" height="10" viewBox="0 0 10 10"><rect x="0.6" y="0.6" width="8.2" height="8.2" rx="0.8" fill="#fff" stroke="#c4c4c4" stroke-width="0.9"/></svg>
<div class="t" style="left:-210.60px;width:400px;text-align:right;top:332.83px;font-size:8.2px;color:#7a7040;font-weight:400;letter-spacing:0.00px;transform:scaleX(0.84);transform-origin:100% 50%;">2</div>
<div class="t" style="left:199.60px;top:332.83px;font-size:8.2px;color:#6a4a4a;font-weight:400;letter-spacing:0.00px;transform:scaleX(0.84);transform-origin:0 50%;">А (80%)</div>
<div class="t" style="left:-127.80px;width:400px;text-align:right;top:332.83px;font-size:8.2px;color:#6a4a4a;font-weight:400;letter-spacing:0.00px;transform:scaleX(0.84);transform-origin:100% 50%;">10,17</div>
<div style="left:277.60px;top:335.12px;width:88.00px;height:13.62px;box-sizing:border-box;border:1px solid #c45a5a;background:#f98a8a;"></div>
<div class="t" style="left:281.30px;top:332.83px;font-size:8.2px;color:#5a3030;font-weight:400;letter-spacing:0.00px;transform:scaleX(0.84);transform-origin:0 50%;">120108 Полотенце бум...</div>
<svg style="position:absolute;left:372.00px;top:337.42px;" width="10" height="9" viewBox="0 0 10 9"><path d="M1 4.3 L3.2 6.6 L7.8 1.0" fill="none" stroke="#2a9c58" stroke-width="1.7"/></svg>
<div class="t" style="left:148.40px;width:400px;text-align:right;top:332.83px;font-size:8.2px;color:#6a4a4a;font-weight:400;letter-spacing:0.00px;transform:scaleX(0.84);transform-origin:100% 50%;">64 231,0</div>
<div class="t" style="left:208.20px;width:400px;text-align:right;top:332.83px;font-size:8.2px;color:#6a4a4a;font-weight:400;letter-spacing:0.00px;transform:scaleX(0.84);transform-origin:100% 50%;">6 812 000,93</div>
<div class="t" style="left:617.50px;top:332.83px;font-size:8.2px;color:#6a4a4a;font-weight:400;letter-spacing:0.00px;transform:scaleX(0.84);transform-origin:0 50%;">1 194 ...</div>
<div class="t" style="left:286.80px;width:400px;text-align:right;top:332.83px;font-size:8.2px;color:#6a4a4a;font-weight:400;letter-spacing:0.00px;transform:scaleX(0.84);transform-origin:100% 50%;">21,26</div>
<div class="t" style="left:335.30px;width:400px;text-align:right;top:332.83px;font-size:8.2px;color:#6a4a4a;font-weight:400;letter-spacing:0.00px;transform:scaleX(0.84);transform-origin:100% 50%;">1 129,0</div>
<div class="t" style="left:386.00px;width:400px;text-align:right;top:332.83px;font-size:8.2px;color:#6a4a4a;font-weight:400;letter-spacing:0.00px;transform:scaleX(0.84);transform-origin:100% 50%;">212</div>
<div class="t" style="left:476.20px;width:400px;text-align:right;top:332.83px;font-size:8.2px;color:#6a4a4a;font-weight:400;letter-spacing:0.00px;transform:scaleX(0.84);transform-origin:100% 50%;">302,98</div>
<div class="t" style="left:528.00px;width:400px;text-align:right;top:332.83px;font-size:8.2px;color:#6a4a4a;font-weight:400;letter-spacing:0.00px;transform:scaleX(0.84);transform-origin:100% 50%;">4</div>
<div style="left:133.90px;top:349.64px;width:35.30px;height:15.42px;background:#fdf8e0;"></div>
<div style="left:194.80px;top:349.94px;width:805.40px;height:14.62px;background:#fe0000;"></div>
<div style="left:133.90px;top:349.14px;width:60.60px;height:0.80px;background:#efefef;"></div>
<div style="left:194.50px;top:349.04px;width:805.70px;height:1.00px;background:#f0f0f0;"></div>
<svg style="position:absolute;left:138.00px;top:352.54px;" width="10" height="10" viewBox="0 0 10 10"><rect x="0.6" y="0.6" width="8.2" height="8.2" rx="0.8" fill="#fff" stroke="#c4c4c4" stroke-width="0.9"/></svg>
<div class="t" style="left:-210.60px;width:400px;text-align:right;top:348.25px;font-size:8.2px;color:#555;font-weight:400;letter-spacing:0.00px;transform:scaleX(0.84);transform-origin:100% 50%;">3</div>
<div class="t" style="left:199.60px;top:348.25px;font-size:8.2px;color:#a30000;font-weight:400;letter-spacing:0.00px;transform:scaleX(0.84);transform-origin:0 50%;">А (80%)</div>
<div class="t" style="left:-127.80px;width:400px;text-align:right;top:348.25px;font-size:8.2px;color:#a30000;font-weight:400;letter-spacing:0.00px;transform:scaleX(0.84);transform-origin:100% 50%;">5,45</div>
<div class="t" style="left:281.30px;top:348.25px;font-size:8.2px;color:#a30000;font-weight:400;letter-spacing:0.00px;transform:scaleX(0.84);transform-origin:0 50%;">120197 Бумага туалет...</div>
<svg style="position:absolute;left:372.00px;top:352.84px;" width="10" height="9" viewBox="0 0 10 9"><path d="M1 4.3 L3.2 6.6 L7.8 1.0" fill="none" stroke="#6e7a20" stroke-width="1.7"/></svg>
<div class="t" style="left:148.40px;width:400px;text-align:right;top:348.25px;font-size:8.2px;color:#a30000;font-weight:400;letter-spacing:0.00px;transform:scaleX(0.84);transform-origin:100% 50%;">38 196,0</div>
<div class="t" style="left:208.20px;width:400px;text-align:right;top:348.25px;font-size:8.2px;color:#a30000;font-weight:400;letter-spacing:0.00px;transform:scaleX(0.84);transform-origin:100% 50%;">3 681 839,42</div>
<div class="t" style="left:617.50px;top:348.25px;font-size:8.2px;color:#a30000;font-weight:400;letter-spacing:0.00px;transform:scaleX(0.84);transform-origin:0 50%;">539,58...</div>
<div class="t" style="left:286.80px;width:400px;text-align:right;top:348.25px;font-size:8.2px;color:#a30000;font-weight:400;letter-spacing:0.00px;transform:scaleX(0.84);transform-origin:100% 50%;">17,18</div>
<div class="t" style="left:335.30px;width:400px;text-align:right;top:348.25px;font-size:8.2px;color:#a30000;font-weight:400;letter-spacing:0.00px;transform:scaleX(0.84);transform-origin:100% 50%;">1 181,0</div>
<div class="t" style="left:386.00px;width:400px;text-align:right;top:348.25px;font-size:8.2px;color:#a30000;font-weight:400;letter-spacing:0.00px;transform:scaleX(0.84);transform-origin:100% 50%;">212</div>
<div class="t" style="left:476.20px;width:400px;text-align:right;top:348.25px;font-size:8.2px;color:#a30000;font-weight:400;letter-spacing:0.00px;transform:scaleX(0.84);transform-origin:100% 50%;">179,89</div>
<div class="t" style="left:528.00px;width:400px;text-align:right;top:348.25px;font-size:8.2px;color:#a30000;font-weight:400;letter-spacing:0.00px;transform:scaleX(0.84);transform-origin:100% 50%;">6</div>
<div style="left:133.90px;top:365.06px;width:35.30px;height:15.42px;background:#fdf8e0;"></div>
<div style="left:194.80px;top:365.36px;width:51.80px;height:14.62px;background:#fe0000;"></div>
<div style="left:133.90px;top:364.56px;width:60.60px;height:0.80px;background:#efefef;"></div>
<div style="left:194.50px;top:364.46px;width:805.70px;height:1.00px;background:#f0f0f0;"></div>
<div style="left:194.10px;top:365.56px;width:0.80px;height:14.42px;background:rgba(255,255,255,0.35);"></div>
<div style="left:246.20px;top:365.56px;width:0.80px;height:14.42px;background:rgba(255,255,255,0.35);"></div>
<div style="left:276.20px;top:365.56px;width:0.80px;height:14.42px;background:rgba(255,255,255,0.35);"></div>
<div style="left:365.70px;top:365.56px;width:0.80px;height:14.42px;background:rgba(255,255,255,0.35);"></div>
<div style="left:466.00px;top:365.56px;width:0.80px;height:14.42px;background:rgba(255,255,255,0.35);"></div>
<div style="left:553.20px;top:365.56px;width:0.80px;height:14.42px;background:rgba(255,255,255,0.35);"></div>
<div style="left:613.00px;top:365.56px;width:0.80px;height:14.42px;background:rgba(255,255,255,0.35);"></div>
<div style="left:650.10px;top:365.56px;width:0.80px;height:14.42px;background:rgba(255,255,255,0.35);"></div>
<div style="left:691.20px;top:365.56px;width:0.80px;height:14.42px;background:rgba(255,255,255,0.35);"></div>
<div style="left:739.10px;top:365.56px;width:0.80px;height:14.42px;background:rgba(255,255,255,0.35);"></div>
<div style="left:789.90px;top:365.56px;width:0.80px;height:14.42px;background:rgba(255,255,255,0.35);"></div>
<div style="left:880.00px;top:365.56px;width:0.80px;height:14.42px;background:rgba(255,255,255,0.35);"></div>
<div style="left:932.00px;top:365.56px;width:0.80px;height:14.42px;background:rgba(255,255,255,0.35);"></div>
<svg style="position:absolute;left:138.00px;top:367.96px;" width="10" height="10" viewBox="0 0 10 10"><rect x="0.6" y="0.6" width="8.2" height="8.2" rx="0.8" fill="#fff" stroke="#c4c4c4" stroke-width="0.9"/></svg>
<div class="t" style="left:-210.60px;width:400px;text-align:right;top:363.67px;font-size:8.2px;color:#555;font-weight:400;letter-spacing:0.00px;transform:scaleX(0.84);transform-origin:100% 50%;">4</div>
<div style="left:194.80px;top:365.36px;width:51.80px;height:14.62px;background:#fff;"></div>
<div class="t" style="left:199.60px;top:363.67px;font-size:8.2px;color:#333;font-weight:400;letter-spacing:0.00px;transform:scaleX(0.84);transform-origin:0 50%;">А (80%)</div>
<div class="t" style="left:-127.80px;width:400px;text-align:right;top:363.67px;font-size:8.2px;color:#484848;font-weight:400;letter-spacing:0.00px;transform:scaleX(0.84);transform-origin:100% 50%;">4,40</div>
<div class="t" style="left:281.30px;top:363.67px;font-size:8.2px;color:#484848;font-weight:400;letter-spacing:0.00px;transform:scaleX(0.84);transform-origin:0 50%;">472272 Tork SmartOne ...</div>
<svg style="position:absolute;left:372.00px;top:368.26px;" width="10" height="9" viewBox="0 0 10 9"><path d="M1 4.3 L3.2 6.6 L7.8 1.0" fill="none" stroke="#2a9c58" stroke-width="1.7"/></svg>
<div class="t" style="left:148.40px;width:400px;text-align:right;top:363.67px;font-size:8.2px;color:#484848;font-weight:400;letter-spacing:0.00px;transform:scaleX(0.84);transform-origin:100% 50%;">9 481,0</div>
<div class="t" style="left:208.20px;width:400px;text-align:right;top:363.67px;font-size:8.2px;color:#484848;font-weight:400;letter-spacing:0.00px;transform:scaleX(0.84);transform-origin:100% 50%;">2 950 173,92</div>
<div class="t" style="left:617.50px;top:363.67px;font-size:8.2px;color:#484848;font-weight:400;letter-spacing:0.00px;transform:scaleX(0.84);transform-origin:0 50%;">749 49...</div>
<div class="t" style="left:286.80px;width:400px;text-align:right;top:363.67px;font-size:8.2px;color:#484848;font-weight:400;letter-spacing:0.00px;transform:scaleX(0.84);transform-origin:100% 50%;">34,06</div>
<div class="t" style="left:335.30px;width:400px;text-align:right;top:363.67px;font-size:8.2px;color:#484848;font-weight:400;letter-spacing:0.00px;transform:scaleX(0.84);transform-origin:100% 50%;">2 055,0</div>
<div class="t" style="left:386.00px;width:400px;text-align:right;top:363.67px;font-size:8.2px;color:#484848;font-weight:400;letter-spacing:0.00px;transform:scaleX(0.84);transform-origin:100% 50%;">212</div>
<div class="t" style="left:476.20px;width:400px;text-align:right;top:363.67px;font-size:8.2px;color:#484848;font-weight:400;letter-spacing:0.00px;transform:scaleX(0.84);transform-origin:100% 50%;">44,72</div>
<div class="t" style="left:528.00px;width:400px;text-align:right;top:363.67px;font-size:8.2px;color:#484848;font-weight:400;letter-spacing:0.00px;transform:scaleX(0.84);transform-origin:100% 50%;">46</div>
<div style="left:133.90px;top:380.48px;width:35.30px;height:15.42px;background:#fdf8e0;"></div>
<div style="left:194.80px;top:380.78px;width:805.40px;height:14.62px;background:#fe0000;"></div>
<div style="left:133.90px;top:379.98px;width:60.60px;height:0.80px;background:#efefef;"></div>
<div style="left:194.50px;top:379.88px;width:805.70px;height:1.00px;background:#f0f0f0;"></div>
<svg style="position:absolute;left:138.00px;top:383.38px;" width="10" height="10" viewBox="0 0 10 10"><rect x="0.6" y="0.6" width="8.2" height="8.2" rx="0.8" fill="#fff" stroke="#c4c4c4" stroke-width="0.9"/></svg>
<div class="t" style="left:-210.60px;width:400px;text-align:right;top:379.09px;font-size:8.2px;color:#555;font-weight:400;letter-spacing:0.00px;transform:scaleX(0.84);transform-origin:100% 50%;">5</div>
<div class="t" style="left:199.60px;top:379.09px;font-size:8.2px;color:#a30000;font-weight:400;letter-spacing:0.00px;transform:scaleX(0.84);transform-origin:0 50%;">А (80%)</div>
<div class="t" style="left:-127.80px;width:400px;text-align:right;top:379.09px;font-size:8.2px;color:#a30000;font-weight:400;letter-spacing:0.00px;transform:scaleX(0.84);transform-origin:100% 50%;">3,96</div>
<div class="t" style="left:281.30px;top:379.09px;font-size:8.2px;color:#a30000;font-weight:400;letter-spacing:0.00px;transform:scaleX(0.84);transform-origin:0 50%;">520581 ВЫВОД_ (сан...</div>
<svg style="position:absolute;left:372.00px;top:383.68px;" width="10" height="9" viewBox="0 0 10 9"><path d="M1 4.3 L3.2 6.6 L7.8 1.0" fill="none" stroke="#6e7a20" stroke-width="1.7"/></svg>
<div class="t" style="left:148.40px;width:400px;text-align:right;top:379.09px;font-size:8.2px;color:#a30000;font-weight:400;letter-spacing:0.00px;transform:scaleX(0.84);transform-origin:100% 50%;">4 240,0</div>
<div class="t" style="left:208.20px;width:400px;text-align:right;top:379.09px;font-size:8.2px;color:#a30000;font-weight:400;letter-spacing:0.00px;transform:scaleX(0.84);transform-origin:100% 50%;">2 655 372,09</div>
<div class="t" style="left:617.50px;top:379.09px;font-size:8.2px;color:#a30000;font-weight:400;letter-spacing:0.00px;transform:scaleX(0.84);transform-origin:0 50%;">590,81</div>
<div class="t" style="left:286.80px;width:400px;text-align:right;top:379.09px;font-size:8.2px;color:#a30000;font-weight:400;letter-spacing:0.00px;transform:scaleX(0.84);transform-origin:100% 50%;">29,11</div>
<div class="t" style="left:335.30px;width:400px;text-align:right;top:379.09px;font-size:8.2px;color:#a30000;font-weight:400;letter-spacing:0.00px;transform:scaleX(0.84);transform-origin:100% 50%;">40,0</div>
<div class="t" style="left:386.00px;width:400px;text-align:right;top:379.09px;font-size:8.2px;color:#a30000;font-weight:400;letter-spacing:0.00px;transform:scaleX(0.84);transform-origin:100% 50%;">212</div>
<div class="t" style="left:476.20px;width:400px;text-align:right;top:379.09px;font-size:8.2px;color:#a30000;font-weight:400;letter-spacing:0.00px;transform:scaleX(0.84);transform-origin:100% 50%;">20,00</div>
<div class="t" style="left:528.00px;width:400px;text-align:right;top:379.09px;font-size:8.2px;color:#a30000;font-weight:400;letter-spacing:0.00px;transform:scaleX(0.84);transform-origin:100% 50%;">2</div>
<div style="left:133.90px;top:395.90px;width:35.30px;height:15.42px;background:#fdf8e0;"></div>
<div style="left:194.80px;top:396.20px;width:805.40px;height:14.62px;background:#fe0000;"></div>
<div style="left:133.90px;top:395.40px;width:60.60px;height:0.80px;background:#efefef;"></div>
<div style="left:194.50px;top:395.30px;width:805.70px;height:1.00px;background:#ff6a6a;"></div>
<svg style="position:absolute;left:138.00px;top:398.80px;" width="10" height="10" viewBox="0 0 10 10"><rect x="0.6" y="0.6" width="8.2" height="8.2" rx="0.8" fill="#fff" stroke="#c4c4c4" stroke-width="0.9"/></svg>
<div class="t" style="left:-210.60px;width:400px;text-align:right;top:394.51px;font-size:8.2px;color:#555;font-weight:400;letter-spacing:0.00px;transform:scaleX(0.84);transform-origin:100% 50%;">6</div>
<div class="t" style="left:199.60px;top:394.51px;font-size:8.2px;color:#a30000;font-weight:400;letter-spacing:0.00px;transform:scaleX(0.84);transform-origin:0 50%;">А (80%)</div>
<div class="t" style="left:-127.80px;width:400px;text-align:right;top:394.51px;font-size:8.2px;color:#a30000;font-weight:400;letter-spacing:0.00px;transform:scaleX(0.84);transform-origin:100% 50%;">3,89</div>
<div class="t" style="left:281.30px;top:394.51px;font-size:8.2px;color:#a30000;font-weight:400;letter-spacing:0.00px;transform:scaleX(0.84);transform-origin:0 50%;">557100  Диспенсер дл...</div>
<svg style="position:absolute;left:372.00px;top:399.10px;" width="10" height="9" viewBox="0 0 10 9"><path d="M1 4.3 L3.2 6.6 L7.8 1.0" fill="none" stroke="#6e7a20" stroke-width="1.7"/></svg>
<div class="t" style="left:148.40px;width:400px;text-align:right;top:394.51px;font-size:8.2px;color:#a30000;font-weight:400;letter-spacing:0.00px;transform:scaleX(0.84);transform-origin:100% 50%;">743,0</div>
<div class="t" style="left:208.20px;width:400px;text-align:right;top:394.51px;font-size:8.2px;color:#a30000;font-weight:400;letter-spacing:0.00px;transform:scaleX(0.84);transform-origin:100% 50%;">2 580 369,01</div>
<div class="t" style="left:617.50px;top:394.51px;font-size:8.2px;color:#a30000;font-weight:400;letter-spacing:0.00px;transform:scaleX(0.84);transform-origin:0 50%;">464,99</div>
<div class="t" style="left:286.80px;width:400px;text-align:right;top:394.51px;font-size:8.2px;color:#a30000;font-weight:400;letter-spacing:0.00px;transform:scaleX(0.84);transform-origin:100% 50%;">21,41</div>
<div class="t" style="left:335.30px;width:400px;text-align:right;top:394.51px;font-size:8.2px;color:#a30000;font-weight:400;letter-spacing:0.00px;transform:scaleX(0.84);transform-origin:100% 50%;"></div>
<div class="t" style="left:386.00px;width:400px;text-align:right;top:394.51px;font-size:8.2px;color:#a30000;font-weight:400;letter-spacing:0.00px;transform:scaleX(0.84);transform-origin:100% 50%;">212</div>
<div class="t" style="left:476.20px;width:400px;text-align:right;top:394.51px;font-size:8.2px;color:#a30000;font-weight:400;letter-spacing:0.00px;transform:scaleX(0.84);transform-origin:100% 50%;">3,50</div>
<div class="t" style="left:528.00px;width:400px;text-align:right;top:394.51px;font-size:8.2px;color:#a30000;font-weight:400;letter-spacing:0.00px;transform:scaleX(0.84);transform-origin:100% 50%;"></div>
<div style="left:133.90px;top:411.32px;width:35.30px;height:15.42px;background:#fdf8e0;"></div>
<div style="left:194.80px;top:411.62px;width:805.40px;height:14.62px;background:#fe0000;"></div>
<div style="left:133.90px;top:410.82px;width:60.60px;height:0.80px;background:#efefef;"></div>
<div style="left:194.50px;top:410.72px;width:805.70px;height:1.00px;background:#ff6a6a;"></div>
<svg style="position:absolute;left:138.00px;top:414.22px;" width="10" height="10" viewBox="0 0 10 10"><rect x="0.6" y="0.6" width="8.2" height="8.2" rx="0.8" fill="#fff" stroke="#c4c4c4" stroke-width="0.9"/></svg>
<div class="t" style="left:-210.60px;width:400px;text-align:right;top:409.93px;font-size:8.2px;color:#555;font-weight:400;letter-spacing:0.00px;transform:scaleX(0.84);transform-origin:100% 50%;">7</div>
<div class="t" style="left:199.60px;top:409.93px;font-size:8.2px;color:#a30000;font-weight:400;letter-spacing:0.00px;transform:scaleX(0.84);transform-origin:0 50%;">А (80%)</div>
<div class="t" style="left:-127.80px;width:400px;text-align:right;top:409.93px;font-size:8.2px;color:#a30000;font-weight:400;letter-spacing:0.00px;transform:scaleX(0.84);transform-origin:100% 50%;">2,89</div>
<div class="t" style="left:281.30px;top:409.93px;font-size:8.2px;color:#a30000;font-weight:400;letter-spacing:0.00px;transform:scaleX(0.84);transform-origin:0 50%;">563000 Корзина для м...</div>
<svg style="position:absolute;left:372.00px;top:414.52px;" width="10" height="9" viewBox="0 0 10 9"><path d="M1 4.3 L3.2 6.6 L7.8 1.0" fill="none" stroke="#6e7a20" stroke-width="1.7"/></svg>
<div class="t" style="left:148.40px;width:400px;text-align:right;top:409.93px;font-size:8.2px;color:#a30000;font-weight:400;letter-spacing:0.00px;transform:scaleX(0.84);transform-origin:100% 50%;">126,6</div>
<div class="t" style="left:208.20px;width:400px;text-align:right;top:409.93px;font-size:8.2px;color:#a30000;font-weight:400;letter-spacing:0.00px;transform:scaleX(0.84);transform-origin:100% 50%;">1 936 344,75</div>
<div class="t" style="left:617.50px;top:409.93px;font-size:8.2px;color:#a30000;font-weight:400;letter-spacing:0.00px;transform:scaleX(0.84);transform-origin:0 50%;">323,16</div>
<div class="t" style="left:286.80px;width:400px;text-align:right;top:409.93px;font-size:8.2px;color:#a30000;font-weight:400;letter-spacing:0.00px;transform:scaleX(0.84);transform-origin:100% 50%;">20,02</div>
<div class="t" style="left:335.30px;width:400px;text-align:right;top:409.93px;font-size:8.2px;color:#a30000;font-weight:400;letter-spacing:0.00px;transform:scaleX(0.84);transform-origin:100% 50%;"></div>
<div class="t" style="left:386.00px;width:400px;text-align:right;top:409.93px;font-size:8.2px;color:#a30000;font-weight:400;letter-spacing:0.00px;transform:scaleX(0.84);transform-origin:100% 50%;">212</div>
<div class="t" style="left:476.20px;width:400px;text-align:right;top:409.93px;font-size:8.2px;color:#a30000;font-weight:400;letter-spacing:0.00px;transform:scaleX(0.84);transform-origin:100% 50%;">0,59</div>
<div class="t" style="left:528.00px;width:400px;text-align:right;top:409.93px;font-size:8.2px;color:#a30000;font-weight:400;letter-spacing:0.00px;transform:scaleX(0.84);transform-origin:100% 50%;"></div>
<div style="left:133.90px;top:426.74px;width:35.30px;height:15.42px;background:#fdf8e0;"></div>
<div style="left:194.80px;top:427.04px;width:805.40px;height:14.62px;background:#fe0000;"></div>
<div style="left:133.90px;top:426.24px;width:60.60px;height:0.80px;background:#efefef;"></div>
<div style="left:194.50px;top:426.14px;width:805.70px;height:1.00px;background:#ff6a6a;"></div>
<svg style="position:absolute;left:138.00px;top:429.64px;" width="10" height="10" viewBox="0 0 10 10"><rect x="0.6" y="0.6" width="8.2" height="8.2" rx="0.8" fill="#fff" stroke="#c4c4c4" stroke-width="0.9"/></svg>
<div class="t" style="left:-210.60px;width:400px;text-align:right;top:425.35px;font-size:8.2px;color:#555;font-weight:400;letter-spacing:0.00px;transform:scaleX(0.84);transform-origin:100% 50%;">8</div>
<div class="t" style="left:199.60px;top:425.35px;font-size:8.2px;color:#a30000;font-weight:400;letter-spacing:0.00px;transform:scaleX(0.84);transform-origin:0 50%;">А (80%)</div>
<div class="t" style="left:-127.80px;width:400px;text-align:right;top:425.35px;font-size:8.2px;color:#a30000;font-weight:400;letter-spacing:0.00px;transform:scaleX(0.84);transform-origin:100% 50%;">2,85</div>
<div class="t" style="left:281.30px;top:425.35px;font-size:8.2px;color:#a30000;font-weight:400;letter-spacing:0.00px;transform:scaleX(0.84);transform-origin:0 50%;">555800 Диспенсер для...</div>
<svg style="position:absolute;left:372.00px;top:429.94px;" width="10" height="9" viewBox="0 0 10 9"><path d="M1 4.3 L3.2 6.6 L7.8 1.0" fill="none" stroke="#6e7a20" stroke-width="1.7"/></svg>
<div class="t" style="left:148.40px;width:400px;text-align:right;top:425.35px;font-size:8.2px;color:#a30000;font-weight:400;letter-spacing:0.00px;transform:scaleX(0.84);transform-origin:100% 50%;">416,0</div>
<div class="t" style="left:208.20px;width:400px;text-align:right;top:425.35px;font-size:8.2px;color:#a30000;font-weight:400;letter-spacing:0.00px;transform:scaleX(0.84);transform-origin:100% 50%;">1 906 610,77</div>
<div class="t" style="left:617.50px;top:425.35px;font-size:8.2px;color:#a30000;font-weight:400;letter-spacing:0.00px;transform:scaleX(0.84);transform-origin:0 50%;">251,25</div>
<div class="t" style="left:286.80px;width:400px;text-align:right;top:425.35px;font-size:8.2px;color:#a30000;font-weight:400;letter-spacing:0.00px;transform:scaleX(0.84);transform-origin:100% 50%;">15,18</div>
<div class="t" style="left:335.30px;width:400px;text-align:right;top:425.35px;font-size:8.2px;color:#a30000;font-weight:400;letter-spacing:0.00px;transform:scaleX(0.84);transform-origin:100% 50%;">3,0</div>
<div class="t" style="left:386.00px;width:400px;text-align:right;top:425.35px;font-size:8.2px;color:#a30000;font-weight:400;letter-spacing:0.00px;transform:scaleX(0.84);transform-origin:100% 50%;">212</div>
<div class="t" style="left:476.20px;width:400px;text-align:right;top:425.35px;font-size:8.2px;color:#a30000;font-weight:400;letter-spacing:0.00px;transform:scaleX(0.84);transform-origin:100% 50%;">1,96</div>
<div class="t" style="left:528.00px;width:400px;text-align:right;top:425.35px;font-size:8.2px;color:#a30000;font-weight:400;letter-spacing:0.00px;transform:scaleX(0.84);transform-origin:100% 50%;">2</div>
<div style="left:133.90px;top:442.16px;width:35.30px;height:15.42px;background:#fdf8e0;"></div>
<div style="left:194.80px;top:442.46px;width:805.40px;height:14.62px;background:#fe0000;"></div>
<div style="left:133.90px;top:441.66px;width:60.60px;height:0.80px;background:#efefef;"></div>
<div style="left:194.50px;top:441.56px;width:805.70px;height:1.00px;background:#ff6a6a;"></div>
<svg style="position:absolute;left:138.00px;top:445.06px;" width="10" height="10" viewBox="0 0 10 10"><rect x="0.6" y="0.6" width="8.2" height="8.2" rx="0.8" fill="#fff" stroke="#c4c4c4" stroke-width="0.9"/></svg>
<div class="t" style="left:-210.60px;width:400px;text-align:right;top:440.77px;font-size:8.2px;color:#555;font-weight:400;letter-spacing:0.00px;transform:scaleX(0.84);transform-origin:100% 50%;">9</div>
<div class="t" style="left:199.60px;top:440.77px;font-size:8.2px;color:#a30000;font-weight:400;letter-spacing:0.00px;transform:scaleX(0.84);transform-origin:0 50%;">А (80%)</div>
<div class="t" style="left:-127.80px;width:400px;text-align:right;top:440.77px;font-size:8.2px;color:#a30000;font-weight:400;letter-spacing:0.00px;transform:scaleX(0.84);transform-origin:100% 50%;">2,37</div>
<div class="t" style="left:281.30px;top:440.77px;font-size:8.2px;color:#a30000;font-weight:400;letter-spacing:0.00px;transform:scaleX(0.84);transform-origin:0 50%;">551100  Диспенсер дл...</div>
<div class="t" style="left:148.40px;width:400px;text-align:right;top:440.77px;font-size:8.2px;color:#a30000;font-weight:400;letter-spacing:0.00px;transform:scaleX(0.84);transform-origin:100% 50%;">32,0</div>
<div class="t" style="left:208.20px;width:400px;text-align:right;top:440.77px;font-size:8.2px;color:#a30000;font-weight:400;letter-spacing:0.00px;transform:scaleX(0.84);transform-origin:100% 50%;">1 584 929,64</div>
<div class="t" style="left:617.50px;top:440.77px;font-size:8.2px;color:#a30000;font-weight:400;letter-spacing:0.00px;transform:scaleX(0.84);transform-origin:0 50%;">227,17</div>
<div class="t" style="left:286.80px;width:400px;text-align:right;top:440.77px;font-size:8.2px;color:#a30000;font-weight:400;letter-spacing:0.00px;transform:scaleX(0.84);transform-origin:100% 50%;">16,73</div>
<div class="t" style="left:335.30px;width:400px;text-align:right;top:440.77px;font-size:8.2px;color:#a30000;font-weight:400;letter-spacing:0.00px;transform:scaleX(0.84);transform-origin:100% 50%;"></div>
<div class="t" style="left:386.00px;width:400px;text-align:right;top:440.77px;font-size:8.2px;color:#a30000;font-weight:400;letter-spacing:0.00px;transform:scaleX(0.84);transform-origin:100% 50%;">212</div>
<div class="t" style="left:476.20px;width:400px;text-align:right;top:440.77px;font-size:8.2px;color:#a30000;font-weight:400;letter-spacing:0.00px;transform:scaleX(0.84);transform-origin:100% 50%;">0,15</div>
<div class="t" style="left:528.00px;width:400px;text-align:right;top:440.77px;font-size:8.2px;color:#a30000;font-weight:400;letter-spacing:0.00px;transform:scaleX(0.84);transform-origin:100% 50%;"></div>
<div style="left:133.90px;top:457.58px;width:35.30px;height:15.42px;background:#fdf8e0;"></div>
<div style="left:194.80px;top:457.88px;width:805.40px;height:14.62px;background:#fe0000;"></div>
<div style="left:133.90px;top:457.08px;width:60.60px;height:0.80px;background:#efefef;"></div>
<div style="left:194.50px;top:456.98px;width:805.70px;height:1.00px;background:#ff6a6a;"></div>
<svg style="position:absolute;left:138.00px;top:460.48px;" width="10" height="10" viewBox="0 0 10 10"><rect x="0.6" y="0.6" width="8.2" height="8.2" rx="0.8" fill="#fff" stroke="#c4c4c4" stroke-width="0.9"/></svg>
<div class="t" style="left:-210.60px;width:400px;text-align:right;top:456.19px;font-size:8.2px;color:#555;font-weight:400;letter-spacing:0.00px;transform:scaleX(0.84);transform-origin:100% 50%;">10</div>
<div class="t" style="left:199.60px;top:456.19px;font-size:8.2px;color:#a30000;font-weight:400;letter-spacing:0.00px;transform:scaleX(0.84);transform-origin:0 50%;">А (80%)</div>
<div class="t" style="left:-127.80px;width:400px;text-align:right;top:456.19px;font-size:8.2px;color:#a30000;font-weight:400;letter-spacing:0.00px;transform:scaleX(0.84);transform-origin:100% 50%;">2,09</div>
<div class="t" style="left:281.30px;top:456.19px;font-size:8.2px;color:#a30000;font-weight:400;letter-spacing:0.00px;transform:scaleX(0.84);transform-origin:0 50%;">352200 Натяжной про...</div>
<svg style="position:absolute;left:372.00px;top:460.78px;" width="10" height="9" viewBox="0 0 10 9"><path d="M1 4.3 L3.2 6.6 L7.8 1.0" fill="none" stroke="#6e7a20" stroke-width="1.7"/></svg>
<div class="t" style="left:148.40px;width:400px;text-align:right;top:456.19px;font-size:8.2px;color:#a30000;font-weight:400;letter-spacing:0.00px;transform:scaleX(0.84);transform-origin:100% 50%;">566,0</div>
<div class="t" style="left:208.20px;width:400px;text-align:right;top:456.19px;font-size:8.2px;color:#a30000;font-weight:400;letter-spacing:0.00px;transform:scaleX(0.84);transform-origin:100% 50%;">1 396 073,16</div>
<div class="t" style="left:617.50px;top:456.19px;font-size:8.2px;color:#a30000;font-weight:400;letter-spacing:0.00px;transform:scaleX(0.84);transform-origin:0 50%;">58 255</div>
<div class="t" style="left:286.80px;width:400px;text-align:right;top:456.19px;font-size:8.2px;color:#a30000;font-weight:400;letter-spacing:0.00px;transform:scaleX(0.84);transform-origin:100% 50%;">4,35</div>
<div class="t" style="left:335.30px;width:400px;text-align:right;top:456.19px;font-size:8.2px;color:#a30000;font-weight:400;letter-spacing:0.00px;transform:scaleX(0.84);transform-origin:100% 50%;"></div>
<div class="t" style="left:386.00px;width:400px;text-align:right;top:456.19px;font-size:8.2px;color:#a30000;font-weight:400;letter-spacing:0.00px;transform:scaleX(0.84);transform-origin:100% 50%;">212</div>
<div class="t" style="left:476.20px;width:400px;text-align:right;top:456.19px;font-size:8.2px;color:#a30000;font-weight:400;letter-spacing:0.00px;transform:scaleX(0.84);transform-origin:100% 50%;">2,67</div>
<div class="t" style="left:528.00px;width:400px;text-align:right;top:456.19px;font-size:8.2px;color:#a30000;font-weight:400;letter-spacing:0.00px;transform:scaleX(0.84);transform-origin:100% 50%;"></div>
<div style="left:133.90px;top:473.00px;width:35.30px;height:15.42px;background:#fdf8e0;"></div>
<div style="left:194.80px;top:473.30px;width:805.40px;height:14.62px;background:#fe0000;"></div>
<div style="left:133.90px;top:472.50px;width:60.60px;height:0.80px;background:#efefef;"></div>
<div style="left:194.50px;top:472.40px;width:805.70px;height:1.00px;background:#ff6a6a;"></div>
<svg style="position:absolute;left:138.00px;top:475.90px;" width="10" height="10" viewBox="0 0 10 10"><rect x="0.6" y="0.6" width="8.2" height="8.2" rx="0.8" fill="#fff" stroke="#c4c4c4" stroke-width="0.9"/></svg>
<div class="t" style="left:-210.60px;width:400px;text-align:right;top:471.61px;font-size:8.2px;color:#555;font-weight:400;letter-spacing:0.00px;transform:scaleX(0.84);transform-origin:100% 50%;">11</div>
<div class="t" style="left:199.60px;top:471.61px;font-size:8.2px;color:#a30000;font-weight:400;letter-spacing:0.00px;transform:scaleX(0.84);transform-origin:0 50%;">А (80%)</div>
<div class="t" style="left:-127.80px;width:400px;text-align:right;top:471.61px;font-size:8.2px;color:#a30000;font-weight:400;letter-spacing:0.00px;transform:scaleX(0.84);transform-origin:100% 50%;">2,00</div>
<div class="t" style="left:281.30px;top:471.61px;font-size:8.2px;color:#a30000;font-weight:400;letter-spacing:0.00px;transform:scaleX(0.84);transform-origin:0 50%;">560000  Диспенсер дл...</div>
<svg style="position:absolute;left:372.00px;top:476.20px;" width="10" height="9" viewBox="0 0 10 9"><path d="M1 4.3 L3.2 6.6 L7.8 1.0" fill="none" stroke="#6e7a20" stroke-width="1.7"/></svg>
<div class="t" style="left:148.40px;width:400px;text-align:right;top:471.61px;font-size:8.2px;color:#a30000;font-weight:400;letter-spacing:0.00px;transform:scaleX(0.84);transform-origin:100% 50%;">394,0</div>
<div class="t" style="left:208.20px;width:400px;text-align:right;top:471.61px;font-size:8.2px;color:#a30000;font-weight:400;letter-spacing:0.00px;transform:scaleX(0.84);transform-origin:100% 50%;">1 371 387,68</div>
<div class="t" style="left:617.50px;top:471.61px;font-size:8.2px;color:#a30000;font-weight:400;letter-spacing:0.00px;transform:scaleX(0.84);transform-origin:0 50%;">266,12</div>
<div class="t" style="left:286.80px;width:400px;text-align:right;top:471.61px;font-size:8.2px;color:#a30000;font-weight:400;letter-spacing:0.00px;transform:scaleX(0.84);transform-origin:100% 50%;">24,09</div>
<div class="t" style="left:335.30px;width:400px;text-align:right;top:471.61px;font-size:8.2px;color:#a30000;font-weight:400;letter-spacing:0.00px;transform:scaleX(0.84);transform-origin:100% 50%;">13,0</div>
<div class="t" style="left:386.00px;width:400px;text-align:right;top:471.61px;font-size:8.2px;color:#a30000;font-weight:400;letter-spacing:0.00px;transform:scaleX(0.84);transform-origin:100% 50%;">212</div>
<div class="t" style="left:476.20px;width:400px;text-align:right;top:471.61px;font-size:8.2px;color:#a30000;font-weight:400;letter-spacing:0.00px;transform:scaleX(0.84);transform-origin:100% 50%;">1,86</div>
<div class="t" style="left:528.00px;width:400px;text-align:right;top:471.61px;font-size:8.2px;color:#a30000;font-weight:400;letter-spacing:0.00px;transform:scaleX(0.84);transform-origin:100% 50%;">7</div>
<div style="left:133.90px;top:488.42px;width:35.30px;height:15.42px;background:#fdf8e0;"></div>
<div style="left:194.80px;top:488.72px;width:805.40px;height:14.62px;background:#fe0000;"></div>
<div style="left:133.90px;top:487.92px;width:60.60px;height:0.80px;background:#efefef;"></div>
<div style="left:194.50px;top:487.82px;width:805.70px;height:1.00px;background:#ff6a6a;"></div>
<svg style="position:absolute;left:138.00px;top:491.32px;" width="10" height="10" viewBox="0 0 10 10"><rect x="0.6" y="0.6" width="8.2" height="8.2" rx="0.8" fill="#fff" stroke="#c4c4c4" stroke-width="0.9"/></svg>
<div class="t" style="left:-210.60px;width:400px;text-align:right;top:487.03px;font-size:8.2px;color:#555;font-weight:400;letter-spacing:0.00px;transform:scaleX(0.84);transform-origin:100% 50%;">12</div>
<div class="t" style="left:199.60px;top:487.03px;font-size:8.2px;color:#a30000;font-weight:400;letter-spacing:0.00px;transform:scaleX(0.84);transform-origin:0 50%;">А (80%)</div>
<div class="t" style="left:-127.80px;width:400px;text-align:right;top:487.03px;font-size:8.2px;color:#a30000;font-weight:400;letter-spacing:0.00px;transform:scaleX(0.84);transform-origin:100% 50%;">1,92</div>
<div class="t" style="left:281.30px;top:487.03px;font-size:8.2px;color:#a30000;font-weight:400;letter-spacing:0.00px;transform:scaleX(0.84);transform-origin:0 50%;">460011 Корзина для м...</div>
<svg style="position:absolute;left:372.00px;top:491.62px;" width="10" height="9" viewBox="0 0 10 9"><path d="M1 4.3 L3.2 6.6 L7.8 1.0" fill="none" stroke="#6e7a20" stroke-width="1.7"/></svg>
<div class="t" style="left:148.40px;width:400px;text-align:right;top:487.03px;font-size:8.2px;color:#a30000;font-weight:400;letter-spacing:0.00px;transform:scaleX(0.84);transform-origin:100% 50%;">23,0</div>
<div class="t" style="left:208.20px;width:400px;text-align:right;top:487.03px;font-size:8.2px;color:#a30000;font-weight:400;letter-spacing:0.00px;transform:scaleX(0.84);transform-origin:100% 50%;">1 286 638,74</div>
<div class="t" style="left:617.50px;top:487.03px;font-size:8.2px;color:#a30000;font-weight:400;letter-spacing:0.00px;transform:scaleX(0.84);transform-origin:0 50%;">215,56</div>
<div class="t" style="left:286.80px;width:400px;text-align:right;top:487.03px;font-size:8.2px;color:#a30000;font-weight:400;letter-spacing:0.00px;transform:scaleX(0.84);transform-origin:100% 50%;">20,12</div>
<div class="t" style="left:335.30px;width:400px;text-align:right;top:487.03px;font-size:8.2px;color:#a30000;font-weight:400;letter-spacing:0.00px;transform:scaleX(0.84);transform-origin:100% 50%;">2,0</div>
<div class="t" style="left:386.00px;width:400px;text-align:right;top:487.03px;font-size:8.2px;color:#a30000;font-weight:400;letter-spacing:0.00px;transform:scaleX(0.84);transform-origin:100% 50%;">212</div>
<div class="t" style="left:476.20px;width:400px;text-align:right;top:487.03px;font-size:8.2px;color:#a30000;font-weight:400;letter-spacing:0.00px;transform:scaleX(0.84);transform-origin:100% 50%;">0,11</div>
<div class="t" style="left:528.00px;width:400px;text-align:right;top:487.03px;font-size:8.2px;color:#a30000;font-weight:400;letter-spacing:0.00px;transform:scaleX(0.84);transform-origin:100% 50%;">28</div>
<div style="left:133.90px;top:503.84px;width:35.30px;height:15.42px;background:#fdf8e0;"></div>
<div style="left:194.80px;top:504.14px;width:805.40px;height:14.62px;background:#fe0000;"></div>
<div style="left:133.90px;top:503.34px;width:60.60px;height:0.80px;background:#efefef;"></div>
<div style="left:194.50px;top:503.24px;width:805.70px;height:1.00px;background:#ff6a6a;"></div>
<svg style="position:absolute;left:138.00px;top:506.74px;" width="10" height="10" viewBox="0 0 10 10"><rect x="0.6" y="0.6" width="8.2" height="8.2" rx="0.8" fill="#fff" stroke="#c4c4c4" stroke-width="0.9"/></svg>
<div class="t" style="left:-210.60px;width:400px;text-align:right;top:502.45px;font-size:8.2px;color:#555;font-weight:400;letter-spacing:0.00px;transform:scaleX(0.84);transform-origin:100% 50%;">13</div>
<div class="t" style="left:199.60px;top:502.45px;font-size:8.2px;color:#a30000;font-weight:400;letter-spacing:0.00px;transform:scaleX(0.84);transform-origin:0 50%;">А (80%)</div>
<div class="t" style="left:-127.80px;width:400px;text-align:right;top:502.45px;font-size:8.2px;color:#a30000;font-weight:400;letter-spacing:0.00px;transform:scaleX(0.84);transform-origin:100% 50%;">1,73</div>
<div class="t" style="left:281.30px;top:502.45px;font-size:8.2px;color:#a30000;font-weight:400;letter-spacing:0.00px;transform:scaleX(0.84);transform-origin:0 50%;">561500 Диспенсер для...</div>
<svg style="position:absolute;left:372.00px;top:507.04px;" width="10" height="9" viewBox="0 0 10 9"><path d="M1 4.3 L3.2 6.6 L7.8 1.0" fill="none" stroke="#6e7a20" stroke-width="1.7"/></svg>
<div class="t" style="left:148.40px;width:400px;text-align:right;top:502.45px;font-size:8.2px;color:#a30000;font-weight:400;letter-spacing:0.00px;transform:scaleX(0.84);transform-origin:100% 50%;">303,0</div>
<div class="t" style="left:208.20px;width:400px;text-align:right;top:502.45px;font-size:8.2px;color:#a30000;font-weight:400;letter-spacing:0.00px;transform:scaleX(0.84);transform-origin:100% 50%;">1 157 820,01</div>
<div class="t" style="left:617.50px;top:502.45px;font-size:8.2px;color:#a30000;font-weight:400;letter-spacing:0.00px;transform:scaleX(0.84);transform-origin:0 50%;">250,71</div>
<div class="t" style="left:286.80px;width:400px;text-align:right;top:502.45px;font-size:8.2px;color:#a30000;font-weight:400;letter-spacing:0.00px;transform:scaleX(0.84);transform-origin:100% 50%;">27,64</div>
<div class="t" style="left:335.30px;width:400px;text-align:right;top:502.45px;font-size:8.2px;color:#a30000;font-weight:400;letter-spacing:0.00px;transform:scaleX(0.84);transform-origin:100% 50%;"></div>
<div class="t" style="left:386.00px;width:400px;text-align:right;top:502.45px;font-size:8.2px;color:#a30000;font-weight:400;letter-spacing:0.00px;transform:scaleX(0.84);transform-origin:100% 50%;">212</div>
<div class="t" style="left:476.20px;width:400px;text-align:right;top:502.45px;font-size:8.2px;color:#a30000;font-weight:400;letter-spacing:0.00px;transform:scaleX(0.84);transform-origin:100% 50%;">1,43</div>
<div class="t" style="left:528.00px;width:400px;text-align:right;top:502.45px;font-size:8.2px;color:#a30000;font-weight:400;letter-spacing:0.00px;transform:scaleX(0.84);transform-origin:100% 50%;"></div>
<div style="left:133.90px;top:519.26px;width:35.30px;height:15.42px;background:#fdf8e0;"></div>
<div style="left:194.80px;top:519.56px;width:805.40px;height:14.62px;background:#fe0000;"></div>
<div style="left:133.90px;top:518.76px;width:60.60px;height:0.80px;background:#efefef;"></div>
<div style="left:194.50px;top:518.66px;width:805.70px;height:1.00px;background:#ff6a6a;"></div>
<svg style="position:absolute;left:138.00px;top:522.16px;" width="10" height="10" viewBox="0 0 10 10"><rect x="0.6" y="0.6" width="8.2" height="8.2" rx="0.8" fill="#fff" stroke="#c4c4c4" stroke-width="0.9"/></svg>
<div class="t" style="left:-210.60px;width:400px;text-align:right;top:517.87px;font-size:8.2px;color:#555;font-weight:400;letter-spacing:0.00px;transform:scaleX(0.84);transform-origin:100% 50%;">14</div>
<div class="t" style="left:199.60px;top:517.87px;font-size:8.2px;color:#a30000;font-weight:400;letter-spacing:0.00px;transform:scaleX(0.84);transform-origin:0 50%;">А (80%)</div>
<div class="t" style="left:-127.80px;width:400px;text-align:right;top:517.87px;font-size:8.2px;color:#a30000;font-weight:400;letter-spacing:0.00px;transform:scaleX(0.84);transform-origin:100% 50%;">1,58</div>
<div class="t" style="left:281.30px;top:517.87px;font-size:8.2px;color:#a30000;font-weight:400;letter-spacing:0.00px;transform:scaleX(0.84);transform-origin:0 50%;">120320  Бумага туалет...</div>
<svg style="position:absolute;left:372.00px;top:522.46px;" width="10" height="9" viewBox="0 0 10 9"><path d="M1 4.3 L3.2 6.6 L7.8 1.0" fill="none" stroke="#6e7a20" stroke-width="1.7"/></svg>
<div class="t" style="left:148.40px;width:400px;text-align:right;top:517.87px;font-size:8.2px;color:#a30000;font-weight:400;letter-spacing:0.00px;transform:scaleX(0.84);transform-origin:100% 50%;">5 418,0</div>
<div class="t" style="left:208.20px;width:400px;text-align:right;top:517.87px;font-size:8.2px;color:#a30000;font-weight:400;letter-spacing:0.00px;transform:scaleX(0.84);transform-origin:100% 50%;">1 061 521,97</div>
<div class="t" style="left:617.50px;top:517.87px;font-size:8.2px;color:#a30000;font-weight:400;letter-spacing:0.00px;transform:scaleX(0.84);transform-origin:0 50%;">148,30</div>
<div class="t" style="left:286.80px;width:400px;text-align:right;top:517.87px;font-size:8.2px;color:#a30000;font-weight:400;letter-spacing:0.00px;transform:scaleX(0.84);transform-origin:100% 50%;">16,24</div>
<div class="t" style="left:335.30px;width:400px;text-align:right;top:517.87px;font-size:8.2px;color:#a30000;font-weight:400;letter-spacing:0.00px;transform:scaleX(0.84);transform-origin:100% 50%;">396,0</div>
<div class="t" style="left:386.00px;width:400px;text-align:right;top:517.87px;font-size:8.2px;color:#a30000;font-weight:400;letter-spacing:0.00px;transform:scaleX(0.84);transform-origin:100% 50%;">212</div>
<div class="t" style="left:476.20px;width:400px;text-align:right;top:517.87px;font-size:8.2px;color:#a30000;font-weight:400;letter-spacing:0.00px;transform:scaleX(0.84);transform-origin:100% 50%;">25,56</div>
<div class="t" style="left:528.00px;width:400px;text-align:right;top:517.87px;font-size:8.2px;color:#a30000;font-weight:400;letter-spacing:0.00px;transform:scaleX(0.84);transform-origin:100% 50%;">15</div>
<div style="left:1001.80px;top:315.00px;width:4.40px;height:206.00px;background:#dcdcdc;border-radius:2.2px;"></div>
<div style="left:1001.80px;top:315.00px;width:4.40px;height:15.00px;background:#9a9a9a;border-radius:2.2px;"></div>
<svg style="position:absolute;left:1002.00px;top:306.00px;" width="4" height="4" viewBox="0 0 4 4"><circle cx="2" cy="2" r="0.8" fill="#888"/></svg>
<svg style="position:absolute;left:1002.00px;top:526.00px;" width="4" height="4" viewBox="0 0 4 4"><path d="M0.3 1 L3.7 1 L2 3 Z" fill="#444"/></svg>
<div style="left:146.50px;top:536.20px;width:841.00px;height:3.40px;background:#dadada;border-radius:1.7px;"></div>
<div style="left:146.50px;top:536.20px;width:427.50px;height:3.40px;background:#9a9a9a;border-radius:1.7px;"></div>
<svg style="position:absolute;left:137.00px;top:536.00px;" width="4" height="4" viewBox="0 0 4 4"><circle cx="2" cy="2" r="0.7" fill="#aaa"/></svg>
<svg style="position:absolute;left:992.00px;top:536.00px;" width="4" height="4" viewBox="0 0 4 4"><path d="M1 0.3 L3 2 L1 3.7 Z" fill="#444"/></svg></body></html>
